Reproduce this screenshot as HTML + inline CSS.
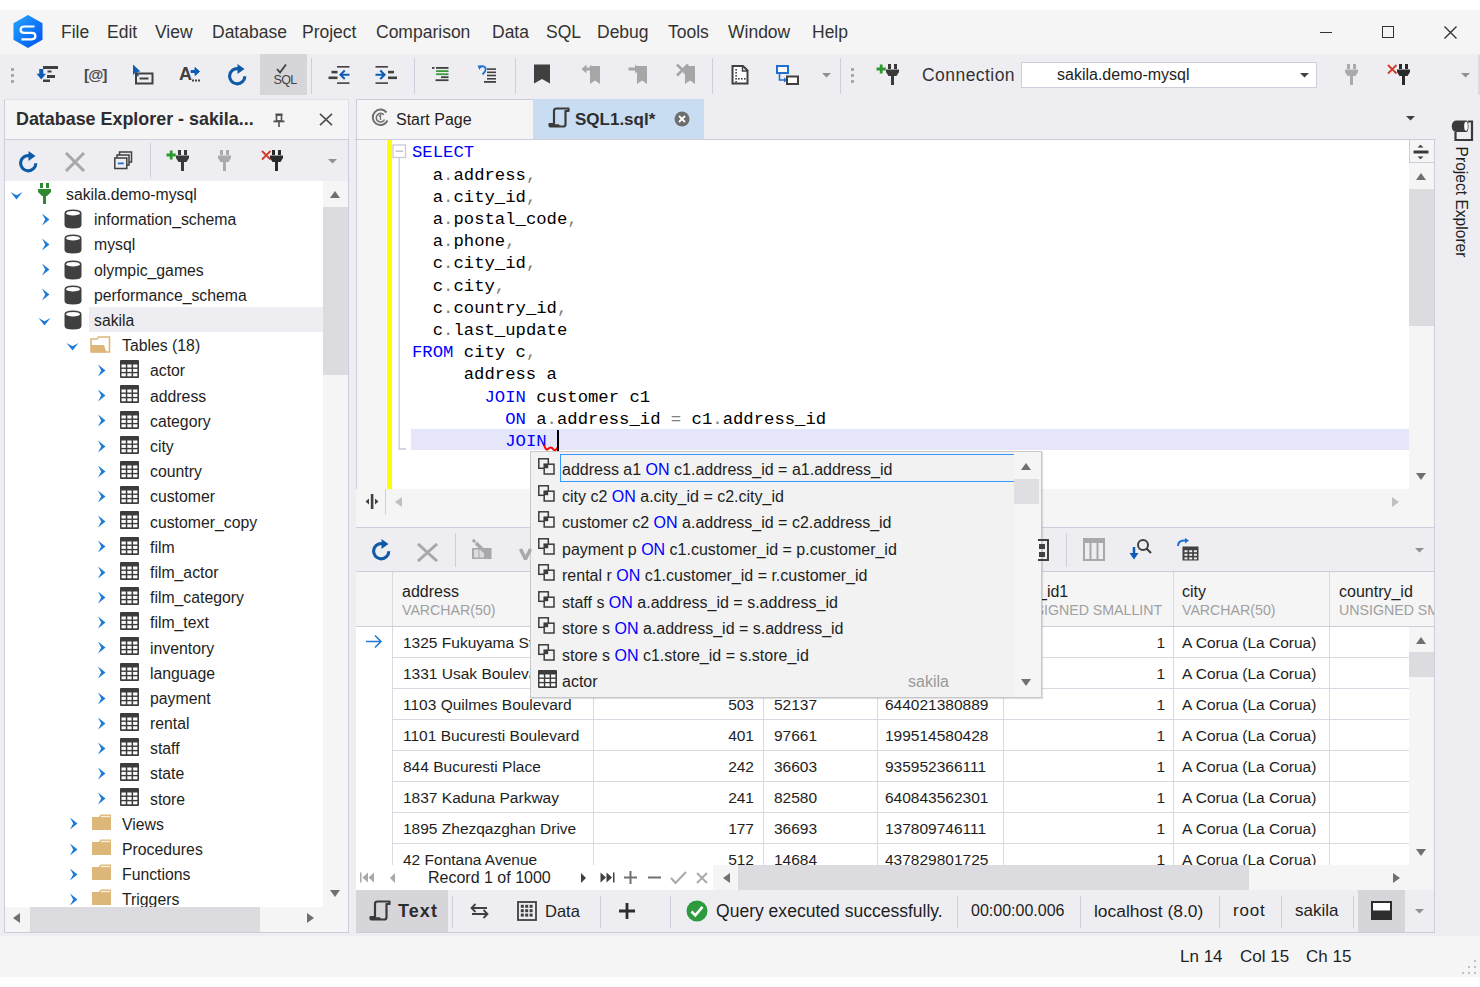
<!DOCTYPE html><html><head><meta charset="utf-8"><style>
html,body{margin:0;padding:0;}
body{width:1480px;height:987px;overflow:hidden;position:relative;background:#fff;font-family:"Liberation Sans",sans-serif;}
.a{position:absolute;}
.t{position:absolute;white-space:nowrap;line-height:30px;height:30px;}
.m{font-family:"Liberation Mono",monospace;}
</style></head><body>
<div class="a" style="left:0px;top:0px;width:1480px;height:10px;background:#FFFFFF;"></div>
<div class="a" style="left:0px;top:10px;width:1480px;height:44px;background:#F5F5F5;"></div>
<div class="a" style="left:0px;top:54px;width:1480px;height:45px;background:#EEEEF2;"></div>
<div class="a" style="left:0px;top:99px;width:1480px;height:837px;background:#EEEEF2;"></div>
<div class="a" style="left:0px;top:936px;width:1480px;height:41px;background:#F5F5F5;"></div>
<div class="a" style="left:0px;top:977px;width:1480px;height:10px;background:#FFFFFF;"></div>
<div class="t" style="left:61px;top:16.50px;font-size:17.5px;color:#333333;font-weight:normal;">File</div>
<div class="t" style="left:107px;top:16.50px;font-size:17.5px;color:#333333;font-weight:normal;">Edit</div>
<div class="t" style="left:155px;top:16.50px;font-size:17.5px;color:#333333;font-weight:normal;">View</div>
<div class="t" style="left:212px;top:16.50px;font-size:17.5px;color:#333333;font-weight:normal;">Database</div>
<div class="t" style="left:302px;top:16.50px;font-size:17.5px;color:#333333;font-weight:normal;">Project</div>
<div class="t" style="left:376px;top:16.50px;font-size:17.5px;color:#333333;font-weight:normal;">Comparison</div>
<div class="t" style="left:492px;top:16.50px;font-size:17.5px;color:#333333;font-weight:normal;">Data</div>
<div class="t" style="left:546px;top:16.50px;font-size:17.5px;color:#333333;font-weight:normal;">SQL</div>
<div class="t" style="left:597px;top:16.50px;font-size:17.5px;color:#333333;font-weight:normal;">Debug</div>
<div class="t" style="left:668px;top:16.50px;font-size:17.5px;color:#333333;font-weight:normal;">Tools</div>
<div class="t" style="left:728px;top:16.50px;font-size:17.5px;color:#333333;font-weight:normal;">Window</div>
<div class="t" style="left:812px;top:16.50px;font-size:17.5px;color:#333333;font-weight:normal;">Help</div>
<div class="a" style="left:1320px;top:32px;width:12px;height:1.3px;background:#333333;"></div>
<div class="a" style="left:1382px;top:26px;width:12px;height:12px;border:1.3px solid #333333;box-sizing:border-box;"></div>
<svg class="a" style="left:1444px;top:26px;" width="13" height="13" viewBox="0 0 13 13"><path d="M0.5 0.5L12.5 12.5M12.5 0.5L0.5 12.5" stroke="#333333" stroke-width="1.4"/></svg>
<div class="a" style="left:260px;top:54px;width:47px;height:41px;background:#D6D6DA;"></div>
<div class="a" style="left:311px;top:58px;width:1px;height:36px;background:#CCCEDB;"></div>
<div class="a" style="left:414px;top:58px;width:1px;height:36px;background:#CCCEDB;"></div>
<div class="a" style="left:515px;top:58px;width:1px;height:36px;background:#CCCEDB;"></div>
<div class="a" style="left:712px;top:58px;width:1px;height:36px;background:#CCCEDB;"></div>
<div class="a" style="left:840px;top:58px;width:1px;height:36px;background:#CCCEDB;"></div>
<div class="t" style="left:922px;top:60.00px;font-size:17.5px;color:#333333;font-weight:normal;letter-spacing:0.45px;">Connection</div>
<div class="a" style="left:1021px;top:62px;width:296px;height:26px;background:#FFFFFF;border:1px solid #CCCEDB;box-sizing:border-box;"></div>
<div class="t" style="left:1057px;top:60.00px;font-size:16px;color:#1E1E1E;font-weight:normal;">sakila.demo-mysql</div>
<div class="a" style="left:4px;top:99px;width:345px;height:834px;background:#FFFFFF;border:1px solid #CCCEDB;box-sizing:border-box;"></div>
<div class="a" style="left:5px;top:100px;width:343px;height:39px;background:#F5F5F5;"></div>
<div class="a" style="left:5px;top:139px;width:343px;height:1px;background:#CCCEDB;"></div>
<div class="a" style="left:5px;top:140px;width:343px;height:41px;background:#EEEEF2;"></div>
<div class="t" style="left:16px;top:104.30px;font-size:17.9px;color:#2D2D30;font-weight:bold;">Database Explorer - sakila...</div>
<div class="a" style="left:323px;top:181px;width:25px;height:726px;background:#F5F5F5;"></div>
<div class="a" style="left:323px;top:207px;width:25px;height:168px;background:#DCDCE0;"></div>
<div class="a" style="left:5px;top:907px;width:343px;height:25px;background:#F5F5F5;"></div>
<div class="a" style="left:30px;top:907px;width:230px;height:25px;background:#DCDCE0;"></div>
<div class="a" style="left:355px;top:99px;width:81px;height:1px;background:#EEEEF2;"></div>
<div class="a" style="left:356px;top:99px;width:177px;height:40px;background:#F5F5F5;"></div>
<div class="a" style="left:533px;top:99px;width:171px;height:40px;background:#C9DDF2;"></div>
<div class="a" style="left:355px;top:139px;width:1081px;height:1px;background:#CCCEDB;"></div>
<div class="a" style="left:356px;top:140px;width:1px;height:793px;background:#CCCEDB;"></div>
<div class="a" style="left:1434px;top:140px;width:1px;height:793px;background:#CCCEDB;"></div>
<div class="t" style="left:396px;top:105.00px;font-size:16px;color:#1E1E1E;font-weight:normal;">Start Page</div>
<div class="t" style="left:575px;top:104.80px;font-size:17px;color:#2D2D30;font-weight:bold;">SQL1.sql*</div>
<div class="a" style="left:357px;top:140px;width:1078px;height:349px;background:#FFFFFF;"></div>
<div class="a" style="left:387px;top:140px;width:5px;height:349px;background:#FFFF00;"></div>
<div class="a" style="left:411px;top:429px;width:998px;height:21px;background:#E6E6FA;"></div>
<div class="a" style="left:1409px;top:140px;width:25px;height:349px;background:#F5F5F5;"></div>
<div class="a" style="left:1409px;top:189px;width:25px;height:137px;background:#DCDCE0;"></div>
<div class="a" style="left:356px;top:489px;width:1079px;height:38px;background:#F5F5F5;"></div>
<div class="a" style="left:356px;top:527px;width:1079px;height:1px;background:#CCCEDB;"></div>
<div class="a" style="left:356px;top:528px;width:1079px;height:43px;background:#EEEEF2;"></div>
<div class="a" style="left:356px;top:571px;width:1079px;height:1px;background:#CCCEDB;"></div>
<div class="a" style="left:356px;top:572px;width:1079px;height:54px;background:#F5F5F5;"></div>
<div class="a" style="left:356px;top:626px;width:1079px;height:1px;background:#CCCEDB;"></div>
<div class="a" style="left:356px;top:627px;width:1053px;height:238px;background:#FFFFFF;"></div>
<div class="a" style="left:1409px;top:627px;width:26px;height:238px;background:#F5F5F5;"></div>
<div class="a" style="left:1409px;top:652px;width:26px;height:25px;background:#DCDCE0;"></div>
<div class="a" style="left:356px;top:865px;width:357px;height:25px;background:#FFFFFF;"></div>
<div class="a" style="left:713px;top:865px;width:722px;height:25px;background:#F5F5F5;"></div>
<div class="a" style="left:738px;top:865px;width:511px;height:25px;background:#DCDCE0;"></div>
<div class="a" style="left:356px;top:890px;width:1079px;height:42px;background:#EEEEF2;"></div>
<div class="a" style="left:356px;top:932px;width:1079px;height:1px;background:#CCCEDB;"></div>
<div class="a" style="left:356px;top:890px;width:92px;height:42px;background:#D6D6DA;"></div>
<div class="a" style="left:1358px;top:890px;width:47px;height:42px;background:#D6D6DA;"></div>
<div class="t" style="left:1461px;top:187.00px;font-size:15.6px;color:#1E1E1E;font-weight:normal;transform:translate(-50%,0) rotate(90deg);transform-origin:50% 50%;">Project Explorer</div>
<div class="t" style="left:1180px;top:941.80px;font-size:17px;color:#1E1E1E;font-weight:normal;">Ln 14</div>
<div class="t" style="left:1240px;top:941.80px;font-size:17px;color:#1E1E1E;font-weight:normal;">Col 15</div>
<div class="t" style="left:1306px;top:941.80px;font-size:17px;color:#1E1E1E;font-weight:normal;">Ch 15</div>
<div class="a" style="left:89px;top:307px;width:234px;height:25px;background:#EEEEF2;"></div>
<svg class="a" style="left:9.5px;top:191.0px;" width="13" height="9" viewBox="0 0 13 9"><path d="M0.5 1 L6.5 8.5 L12.5 1 L6.5 4.2 Z" fill="#1F7BD8"/></svg>
<svg class="a" style="left:38px;top:183.0px;" width="13" height="21" viewBox="0 0 13 21"><rect x="2" y="0" width="3" height="5" fill="#2F8A2F"/><rect x="8" y="0" width="3" height="5" fill="#2F8A2F"/><path d="M0 6 L13 6 L13 9 L9 13 L4 13 L0 9 Z" fill="#2F8A2F"/><rect x="5" y="12" width="3" height="9" fill="#2F8A2F"/></svg>
<div class="t" style="left:66px;top:180.10px;font-size:15.8px;color:#1E1E1E;font-weight:normal;">sakila.demo-mysql</div>
<svg class="a" style="left:40.5px;top:212.89px;" width="10" height="13" viewBox="0 0 10 13"><path d="M1 0.5 L8.5 6.5 L1 12.5 L4.2 6.5 Z" fill="#1F7BD8"/></svg>
<svg class="a" style="left:64px;top:209.19px;" width="18" height="20" viewBox="0 0 18 20"><path d="M0.5 4 Q0.5 0.5 9 0.5 Q17.5 0.5 17.5 4 L17.5 16 Q17.5 19.5 9 19.5 Q0.5 19.5 0.5 16 Z" fill="#404040"/><ellipse cx="9" cy="4.2" rx="6.8" ry="2.3" fill="#fff"/></svg>
<div class="t" style="left:94px;top:205.29px;font-size:15.8px;color:#1E1E1E;font-weight:normal;">information_schema</div>
<svg class="a" style="left:40.5px;top:238.07999999999998px;" width="10" height="13" viewBox="0 0 10 13"><path d="M1 0.5 L8.5 6.5 L1 12.5 L4.2 6.5 Z" fill="#1F7BD8"/></svg>
<svg class="a" style="left:64px;top:234.38px;" width="18" height="20" viewBox="0 0 18 20"><path d="M0.5 4 Q0.5 0.5 9 0.5 Q17.5 0.5 17.5 4 L17.5 16 Q17.5 19.5 9 19.5 Q0.5 19.5 0.5 16 Z" fill="#404040"/><ellipse cx="9" cy="4.2" rx="6.8" ry="2.3" fill="#fff"/></svg>
<div class="t" style="left:94px;top:230.48px;font-size:15.8px;color:#1E1E1E;font-weight:normal;">mysql</div>
<svg class="a" style="left:40.5px;top:263.27px;" width="10" height="13" viewBox="0 0 10 13"><path d="M1 0.5 L8.5 6.5 L1 12.5 L4.2 6.5 Z" fill="#1F7BD8"/></svg>
<svg class="a" style="left:64px;top:259.57px;" width="18" height="20" viewBox="0 0 18 20"><path d="M0.5 4 Q0.5 0.5 9 0.5 Q17.5 0.5 17.5 4 L17.5 16 Q17.5 19.5 9 19.5 Q0.5 19.5 0.5 16 Z" fill="#404040"/><ellipse cx="9" cy="4.2" rx="6.8" ry="2.3" fill="#fff"/></svg>
<div class="t" style="left:94px;top:255.67px;font-size:15.8px;color:#1E1E1E;font-weight:normal;">olympic_games</div>
<svg class="a" style="left:40.5px;top:288.46px;" width="10" height="13" viewBox="0 0 10 13"><path d="M1 0.5 L8.5 6.5 L1 12.5 L4.2 6.5 Z" fill="#1F7BD8"/></svg>
<svg class="a" style="left:64px;top:284.76px;" width="18" height="20" viewBox="0 0 18 20"><path d="M0.5 4 Q0.5 0.5 9 0.5 Q17.5 0.5 17.5 4 L17.5 16 Q17.5 19.5 9 19.5 Q0.5 19.5 0.5 16 Z" fill="#404040"/><ellipse cx="9" cy="4.2" rx="6.8" ry="2.3" fill="#fff"/></svg>
<div class="t" style="left:94px;top:280.86px;font-size:15.8px;color:#1E1E1E;font-weight:normal;">performance_schema</div>
<svg class="a" style="left:37.5px;top:316.95px;" width="13" height="9" viewBox="0 0 13 9"><path d="M0.5 1 L6.5 8.5 L12.5 1 L6.5 4.2 Z" fill="#1F7BD8"/></svg>
<svg class="a" style="left:64px;top:309.95px;" width="18" height="20" viewBox="0 0 18 20"><path d="M0.5 4 Q0.5 0.5 9 0.5 Q17.5 0.5 17.5 4 L17.5 16 Q17.5 19.5 9 19.5 Q0.5 19.5 0.5 16 Z" fill="#404040"/><ellipse cx="9" cy="4.2" rx="6.8" ry="2.3" fill="#fff"/></svg>
<div class="t" style="left:94px;top:306.05px;font-size:15.8px;color:#1E1E1E;font-weight:normal;">sakila</div>
<svg class="a" style="left:65.5px;top:342.14px;" width="13" height="9" viewBox="0 0 13 9"><path d="M0.5 1 L6.5 8.5 L12.5 1 L6.5 4.2 Z" fill="#1F7BD8"/></svg>
<svg class="a" style="left:90px;top:336.14px;" width="21" height="17" viewBox="0 0 21 17"><path d="M1 16 L1 3 L7 3 L8.5 1 L19.5 1 L19.5 16 Z" fill="none" stroke="#DDB77A" stroke-width="1.6"/><path d="M0.5 9 L14 9 L16.5 16.5 L1.5 16.5 Z" fill="#DDB77A"/></svg>
<div class="t" style="left:122px;top:331.24px;font-size:15.8px;color:#1E1E1E;font-weight:normal;">Tables (18)</div>
<svg class="a" style="left:96.5px;top:364.03000000000003px;" width="10" height="13" viewBox="0 0 10 13"><path d="M1 0.5 L8.5 6.5 L1 12.5 L4.2 6.5 Z" fill="#1F7BD8"/></svg>
<svg class="a" style="left:120px;top:360.23px;" width="19" height="18" viewBox="0 0 19 18"><rect x="0" y="0" width="19" height="18" rx="1" fill="#3C3C3C"/><rect x="1.5" y="4.5" width="4.3" height="3" fill="#fff"/><rect x="7.3" y="4.5" width="4.3" height="3" fill="#fff"/><rect x="13.1" y="4.5" width="4.3" height="3" fill="#fff"/><rect x="1.5" y="8.9" width="4.3" height="3" fill="#fff"/><rect x="7.3" y="8.9" width="4.3" height="3" fill="#fff"/><rect x="13.1" y="8.9" width="4.3" height="3" fill="#fff"/><rect x="1.5" y="13.3" width="4.3" height="3" fill="#fff"/><rect x="7.3" y="13.3" width="4.3" height="3" fill="#fff"/><rect x="13.1" y="13.3" width="4.3" height="3" fill="#fff"/></svg>
<div class="t" style="left:150px;top:356.43px;font-size:15.8px;color:#1E1E1E;font-weight:normal;">actor</div>
<svg class="a" style="left:96.5px;top:389.21999999999997px;" width="10" height="13" viewBox="0 0 10 13"><path d="M1 0.5 L8.5 6.5 L1 12.5 L4.2 6.5 Z" fill="#1F7BD8"/></svg>
<svg class="a" style="left:120px;top:385.41999999999996px;" width="19" height="18" viewBox="0 0 19 18"><rect x="0" y="0" width="19" height="18" rx="1" fill="#3C3C3C"/><rect x="1.5" y="4.5" width="4.3" height="3" fill="#fff"/><rect x="7.3" y="4.5" width="4.3" height="3" fill="#fff"/><rect x="13.1" y="4.5" width="4.3" height="3" fill="#fff"/><rect x="1.5" y="8.9" width="4.3" height="3" fill="#fff"/><rect x="7.3" y="8.9" width="4.3" height="3" fill="#fff"/><rect x="13.1" y="8.9" width="4.3" height="3" fill="#fff"/><rect x="1.5" y="13.3" width="4.3" height="3" fill="#fff"/><rect x="7.3" y="13.3" width="4.3" height="3" fill="#fff"/><rect x="13.1" y="13.3" width="4.3" height="3" fill="#fff"/></svg>
<div class="t" style="left:150px;top:381.62px;font-size:15.8px;color:#1E1E1E;font-weight:normal;">address</div>
<svg class="a" style="left:96.5px;top:414.41px;" width="10" height="13" viewBox="0 0 10 13"><path d="M1 0.5 L8.5 6.5 L1 12.5 L4.2 6.5 Z" fill="#1F7BD8"/></svg>
<svg class="a" style="left:120px;top:410.61px;" width="19" height="18" viewBox="0 0 19 18"><rect x="0" y="0" width="19" height="18" rx="1" fill="#3C3C3C"/><rect x="1.5" y="4.5" width="4.3" height="3" fill="#fff"/><rect x="7.3" y="4.5" width="4.3" height="3" fill="#fff"/><rect x="13.1" y="4.5" width="4.3" height="3" fill="#fff"/><rect x="1.5" y="8.9" width="4.3" height="3" fill="#fff"/><rect x="7.3" y="8.9" width="4.3" height="3" fill="#fff"/><rect x="13.1" y="8.9" width="4.3" height="3" fill="#fff"/><rect x="1.5" y="13.3" width="4.3" height="3" fill="#fff"/><rect x="7.3" y="13.3" width="4.3" height="3" fill="#fff"/><rect x="13.1" y="13.3" width="4.3" height="3" fill="#fff"/></svg>
<div class="t" style="left:150px;top:406.81px;font-size:15.8px;color:#1E1E1E;font-weight:normal;">category</div>
<svg class="a" style="left:96.5px;top:439.59999999999997px;" width="10" height="13" viewBox="0 0 10 13"><path d="M1 0.5 L8.5 6.5 L1 12.5 L4.2 6.5 Z" fill="#1F7BD8"/></svg>
<svg class="a" style="left:120px;top:435.79999999999995px;" width="19" height="18" viewBox="0 0 19 18"><rect x="0" y="0" width="19" height="18" rx="1" fill="#3C3C3C"/><rect x="1.5" y="4.5" width="4.3" height="3" fill="#fff"/><rect x="7.3" y="4.5" width="4.3" height="3" fill="#fff"/><rect x="13.1" y="4.5" width="4.3" height="3" fill="#fff"/><rect x="1.5" y="8.9" width="4.3" height="3" fill="#fff"/><rect x="7.3" y="8.9" width="4.3" height="3" fill="#fff"/><rect x="13.1" y="8.9" width="4.3" height="3" fill="#fff"/><rect x="1.5" y="13.3" width="4.3" height="3" fill="#fff"/><rect x="7.3" y="13.3" width="4.3" height="3" fill="#fff"/><rect x="13.1" y="13.3" width="4.3" height="3" fill="#fff"/></svg>
<div class="t" style="left:150px;top:432.00px;font-size:15.8px;color:#1E1E1E;font-weight:normal;">city</div>
<svg class="a" style="left:96.5px;top:464.79px;" width="10" height="13" viewBox="0 0 10 13"><path d="M1 0.5 L8.5 6.5 L1 12.5 L4.2 6.5 Z" fill="#1F7BD8"/></svg>
<svg class="a" style="left:120px;top:460.99px;" width="19" height="18" viewBox="0 0 19 18"><rect x="0" y="0" width="19" height="18" rx="1" fill="#3C3C3C"/><rect x="1.5" y="4.5" width="4.3" height="3" fill="#fff"/><rect x="7.3" y="4.5" width="4.3" height="3" fill="#fff"/><rect x="13.1" y="4.5" width="4.3" height="3" fill="#fff"/><rect x="1.5" y="8.9" width="4.3" height="3" fill="#fff"/><rect x="7.3" y="8.9" width="4.3" height="3" fill="#fff"/><rect x="13.1" y="8.9" width="4.3" height="3" fill="#fff"/><rect x="1.5" y="13.3" width="4.3" height="3" fill="#fff"/><rect x="7.3" y="13.3" width="4.3" height="3" fill="#fff"/><rect x="13.1" y="13.3" width="4.3" height="3" fill="#fff"/></svg>
<div class="t" style="left:150px;top:457.19px;font-size:15.8px;color:#1E1E1E;font-weight:normal;">country</div>
<svg class="a" style="left:96.5px;top:489.98px;" width="10" height="13" viewBox="0 0 10 13"><path d="M1 0.5 L8.5 6.5 L1 12.5 L4.2 6.5 Z" fill="#1F7BD8"/></svg>
<svg class="a" style="left:120px;top:486.18px;" width="19" height="18" viewBox="0 0 19 18"><rect x="0" y="0" width="19" height="18" rx="1" fill="#3C3C3C"/><rect x="1.5" y="4.5" width="4.3" height="3" fill="#fff"/><rect x="7.3" y="4.5" width="4.3" height="3" fill="#fff"/><rect x="13.1" y="4.5" width="4.3" height="3" fill="#fff"/><rect x="1.5" y="8.9" width="4.3" height="3" fill="#fff"/><rect x="7.3" y="8.9" width="4.3" height="3" fill="#fff"/><rect x="13.1" y="8.9" width="4.3" height="3" fill="#fff"/><rect x="1.5" y="13.3" width="4.3" height="3" fill="#fff"/><rect x="7.3" y="13.3" width="4.3" height="3" fill="#fff"/><rect x="13.1" y="13.3" width="4.3" height="3" fill="#fff"/></svg>
<div class="t" style="left:150px;top:482.38px;font-size:15.8px;color:#1E1E1E;font-weight:normal;">customer</div>
<svg class="a" style="left:96.5px;top:515.1700000000001px;" width="10" height="13" viewBox="0 0 10 13"><path d="M1 0.5 L8.5 6.5 L1 12.5 L4.2 6.5 Z" fill="#1F7BD8"/></svg>
<svg class="a" style="left:120px;top:511.37px;" width="19" height="18" viewBox="0 0 19 18"><rect x="0" y="0" width="19" height="18" rx="1" fill="#3C3C3C"/><rect x="1.5" y="4.5" width="4.3" height="3" fill="#fff"/><rect x="7.3" y="4.5" width="4.3" height="3" fill="#fff"/><rect x="13.1" y="4.5" width="4.3" height="3" fill="#fff"/><rect x="1.5" y="8.9" width="4.3" height="3" fill="#fff"/><rect x="7.3" y="8.9" width="4.3" height="3" fill="#fff"/><rect x="13.1" y="8.9" width="4.3" height="3" fill="#fff"/><rect x="1.5" y="13.3" width="4.3" height="3" fill="#fff"/><rect x="7.3" y="13.3" width="4.3" height="3" fill="#fff"/><rect x="13.1" y="13.3" width="4.3" height="3" fill="#fff"/></svg>
<div class="t" style="left:150px;top:507.57px;font-size:15.8px;color:#1E1E1E;font-weight:normal;">customer_copy</div>
<svg class="a" style="left:96.5px;top:540.3600000000001px;" width="10" height="13" viewBox="0 0 10 13"><path d="M1 0.5 L8.5 6.5 L1 12.5 L4.2 6.5 Z" fill="#1F7BD8"/></svg>
<svg class="a" style="left:120px;top:536.5600000000001px;" width="19" height="18" viewBox="0 0 19 18"><rect x="0" y="0" width="19" height="18" rx="1" fill="#3C3C3C"/><rect x="1.5" y="4.5" width="4.3" height="3" fill="#fff"/><rect x="7.3" y="4.5" width="4.3" height="3" fill="#fff"/><rect x="13.1" y="4.5" width="4.3" height="3" fill="#fff"/><rect x="1.5" y="8.9" width="4.3" height="3" fill="#fff"/><rect x="7.3" y="8.9" width="4.3" height="3" fill="#fff"/><rect x="13.1" y="8.9" width="4.3" height="3" fill="#fff"/><rect x="1.5" y="13.3" width="4.3" height="3" fill="#fff"/><rect x="7.3" y="13.3" width="4.3" height="3" fill="#fff"/><rect x="13.1" y="13.3" width="4.3" height="3" fill="#fff"/></svg>
<div class="t" style="left:150px;top:532.76px;font-size:15.8px;color:#1E1E1E;font-weight:normal;">film</div>
<svg class="a" style="left:96.5px;top:565.5500000000001px;" width="10" height="13" viewBox="0 0 10 13"><path d="M1 0.5 L8.5 6.5 L1 12.5 L4.2 6.5 Z" fill="#1F7BD8"/></svg>
<svg class="a" style="left:120px;top:561.75px;" width="19" height="18" viewBox="0 0 19 18"><rect x="0" y="0" width="19" height="18" rx="1" fill="#3C3C3C"/><rect x="1.5" y="4.5" width="4.3" height="3" fill="#fff"/><rect x="7.3" y="4.5" width="4.3" height="3" fill="#fff"/><rect x="13.1" y="4.5" width="4.3" height="3" fill="#fff"/><rect x="1.5" y="8.9" width="4.3" height="3" fill="#fff"/><rect x="7.3" y="8.9" width="4.3" height="3" fill="#fff"/><rect x="13.1" y="8.9" width="4.3" height="3" fill="#fff"/><rect x="1.5" y="13.3" width="4.3" height="3" fill="#fff"/><rect x="7.3" y="13.3" width="4.3" height="3" fill="#fff"/><rect x="13.1" y="13.3" width="4.3" height="3" fill="#fff"/></svg>
<div class="t" style="left:150px;top:557.95px;font-size:15.8px;color:#1E1E1E;font-weight:normal;">film_actor</div>
<svg class="a" style="left:96.5px;top:590.74px;" width="10" height="13" viewBox="0 0 10 13"><path d="M1 0.5 L8.5 6.5 L1 12.5 L4.2 6.5 Z" fill="#1F7BD8"/></svg>
<svg class="a" style="left:120px;top:586.9399999999999px;" width="19" height="18" viewBox="0 0 19 18"><rect x="0" y="0" width="19" height="18" rx="1" fill="#3C3C3C"/><rect x="1.5" y="4.5" width="4.3" height="3" fill="#fff"/><rect x="7.3" y="4.5" width="4.3" height="3" fill="#fff"/><rect x="13.1" y="4.5" width="4.3" height="3" fill="#fff"/><rect x="1.5" y="8.9" width="4.3" height="3" fill="#fff"/><rect x="7.3" y="8.9" width="4.3" height="3" fill="#fff"/><rect x="13.1" y="8.9" width="4.3" height="3" fill="#fff"/><rect x="1.5" y="13.3" width="4.3" height="3" fill="#fff"/><rect x="7.3" y="13.3" width="4.3" height="3" fill="#fff"/><rect x="13.1" y="13.3" width="4.3" height="3" fill="#fff"/></svg>
<div class="t" style="left:150px;top:583.14px;font-size:15.8px;color:#1E1E1E;font-weight:normal;">film_category</div>
<svg class="a" style="left:96.5px;top:615.9300000000001px;" width="10" height="13" viewBox="0 0 10 13"><path d="M1 0.5 L8.5 6.5 L1 12.5 L4.2 6.5 Z" fill="#1F7BD8"/></svg>
<svg class="a" style="left:120px;top:612.13px;" width="19" height="18" viewBox="0 0 19 18"><rect x="0" y="0" width="19" height="18" rx="1" fill="#3C3C3C"/><rect x="1.5" y="4.5" width="4.3" height="3" fill="#fff"/><rect x="7.3" y="4.5" width="4.3" height="3" fill="#fff"/><rect x="13.1" y="4.5" width="4.3" height="3" fill="#fff"/><rect x="1.5" y="8.9" width="4.3" height="3" fill="#fff"/><rect x="7.3" y="8.9" width="4.3" height="3" fill="#fff"/><rect x="13.1" y="8.9" width="4.3" height="3" fill="#fff"/><rect x="1.5" y="13.3" width="4.3" height="3" fill="#fff"/><rect x="7.3" y="13.3" width="4.3" height="3" fill="#fff"/><rect x="13.1" y="13.3" width="4.3" height="3" fill="#fff"/></svg>
<div class="t" style="left:150px;top:608.33px;font-size:15.8px;color:#1E1E1E;font-weight:normal;">film_text</div>
<svg class="a" style="left:96.5px;top:641.1200000000001px;" width="10" height="13" viewBox="0 0 10 13"><path d="M1 0.5 L8.5 6.5 L1 12.5 L4.2 6.5 Z" fill="#1F7BD8"/></svg>
<svg class="a" style="left:120px;top:637.32px;" width="19" height="18" viewBox="0 0 19 18"><rect x="0" y="0" width="19" height="18" rx="1" fill="#3C3C3C"/><rect x="1.5" y="4.5" width="4.3" height="3" fill="#fff"/><rect x="7.3" y="4.5" width="4.3" height="3" fill="#fff"/><rect x="13.1" y="4.5" width="4.3" height="3" fill="#fff"/><rect x="1.5" y="8.9" width="4.3" height="3" fill="#fff"/><rect x="7.3" y="8.9" width="4.3" height="3" fill="#fff"/><rect x="13.1" y="8.9" width="4.3" height="3" fill="#fff"/><rect x="1.5" y="13.3" width="4.3" height="3" fill="#fff"/><rect x="7.3" y="13.3" width="4.3" height="3" fill="#fff"/><rect x="13.1" y="13.3" width="4.3" height="3" fill="#fff"/></svg>
<div class="t" style="left:150px;top:633.52px;font-size:15.8px;color:#1E1E1E;font-weight:normal;">inventory</div>
<svg class="a" style="left:96.5px;top:666.3100000000001px;" width="10" height="13" viewBox="0 0 10 13"><path d="M1 0.5 L8.5 6.5 L1 12.5 L4.2 6.5 Z" fill="#1F7BD8"/></svg>
<svg class="a" style="left:120px;top:662.51px;" width="19" height="18" viewBox="0 0 19 18"><rect x="0" y="0" width="19" height="18" rx="1" fill="#3C3C3C"/><rect x="1.5" y="4.5" width="4.3" height="3" fill="#fff"/><rect x="7.3" y="4.5" width="4.3" height="3" fill="#fff"/><rect x="13.1" y="4.5" width="4.3" height="3" fill="#fff"/><rect x="1.5" y="8.9" width="4.3" height="3" fill="#fff"/><rect x="7.3" y="8.9" width="4.3" height="3" fill="#fff"/><rect x="13.1" y="8.9" width="4.3" height="3" fill="#fff"/><rect x="1.5" y="13.3" width="4.3" height="3" fill="#fff"/><rect x="7.3" y="13.3" width="4.3" height="3" fill="#fff"/><rect x="13.1" y="13.3" width="4.3" height="3" fill="#fff"/></svg>
<div class="t" style="left:150px;top:658.71px;font-size:15.8px;color:#1E1E1E;font-weight:normal;">language</div>
<svg class="a" style="left:96.5px;top:691.5px;" width="10" height="13" viewBox="0 0 10 13"><path d="M1 0.5 L8.5 6.5 L1 12.5 L4.2 6.5 Z" fill="#1F7BD8"/></svg>
<svg class="a" style="left:120px;top:687.6999999999999px;" width="19" height="18" viewBox="0 0 19 18"><rect x="0" y="0" width="19" height="18" rx="1" fill="#3C3C3C"/><rect x="1.5" y="4.5" width="4.3" height="3" fill="#fff"/><rect x="7.3" y="4.5" width="4.3" height="3" fill="#fff"/><rect x="13.1" y="4.5" width="4.3" height="3" fill="#fff"/><rect x="1.5" y="8.9" width="4.3" height="3" fill="#fff"/><rect x="7.3" y="8.9" width="4.3" height="3" fill="#fff"/><rect x="13.1" y="8.9" width="4.3" height="3" fill="#fff"/><rect x="1.5" y="13.3" width="4.3" height="3" fill="#fff"/><rect x="7.3" y="13.3" width="4.3" height="3" fill="#fff"/><rect x="13.1" y="13.3" width="4.3" height="3" fill="#fff"/></svg>
<div class="t" style="left:150px;top:683.90px;font-size:15.8px;color:#1E1E1E;font-weight:normal;">payment</div>
<svg class="a" style="left:96.5px;top:716.69px;" width="10" height="13" viewBox="0 0 10 13"><path d="M1 0.5 L8.5 6.5 L1 12.5 L4.2 6.5 Z" fill="#1F7BD8"/></svg>
<svg class="a" style="left:120px;top:712.89px;" width="19" height="18" viewBox="0 0 19 18"><rect x="0" y="0" width="19" height="18" rx="1" fill="#3C3C3C"/><rect x="1.5" y="4.5" width="4.3" height="3" fill="#fff"/><rect x="7.3" y="4.5" width="4.3" height="3" fill="#fff"/><rect x="13.1" y="4.5" width="4.3" height="3" fill="#fff"/><rect x="1.5" y="8.9" width="4.3" height="3" fill="#fff"/><rect x="7.3" y="8.9" width="4.3" height="3" fill="#fff"/><rect x="13.1" y="8.9" width="4.3" height="3" fill="#fff"/><rect x="1.5" y="13.3" width="4.3" height="3" fill="#fff"/><rect x="7.3" y="13.3" width="4.3" height="3" fill="#fff"/><rect x="13.1" y="13.3" width="4.3" height="3" fill="#fff"/></svg>
<div class="t" style="left:150px;top:709.09px;font-size:15.8px;color:#1E1E1E;font-weight:normal;">rental</div>
<svg class="a" style="left:96.5px;top:741.8800000000001px;" width="10" height="13" viewBox="0 0 10 13"><path d="M1 0.5 L8.5 6.5 L1 12.5 L4.2 6.5 Z" fill="#1F7BD8"/></svg>
<svg class="a" style="left:120px;top:738.08px;" width="19" height="18" viewBox="0 0 19 18"><rect x="0" y="0" width="19" height="18" rx="1" fill="#3C3C3C"/><rect x="1.5" y="4.5" width="4.3" height="3" fill="#fff"/><rect x="7.3" y="4.5" width="4.3" height="3" fill="#fff"/><rect x="13.1" y="4.5" width="4.3" height="3" fill="#fff"/><rect x="1.5" y="8.9" width="4.3" height="3" fill="#fff"/><rect x="7.3" y="8.9" width="4.3" height="3" fill="#fff"/><rect x="13.1" y="8.9" width="4.3" height="3" fill="#fff"/><rect x="1.5" y="13.3" width="4.3" height="3" fill="#fff"/><rect x="7.3" y="13.3" width="4.3" height="3" fill="#fff"/><rect x="13.1" y="13.3" width="4.3" height="3" fill="#fff"/></svg>
<div class="t" style="left:150px;top:734.28px;font-size:15.8px;color:#1E1E1E;font-weight:normal;">staff</div>
<svg class="a" style="left:96.5px;top:767.07px;" width="10" height="13" viewBox="0 0 10 13"><path d="M1 0.5 L8.5 6.5 L1 12.5 L4.2 6.5 Z" fill="#1F7BD8"/></svg>
<svg class="a" style="left:120px;top:763.27px;" width="19" height="18" viewBox="0 0 19 18"><rect x="0" y="0" width="19" height="18" rx="1" fill="#3C3C3C"/><rect x="1.5" y="4.5" width="4.3" height="3" fill="#fff"/><rect x="7.3" y="4.5" width="4.3" height="3" fill="#fff"/><rect x="13.1" y="4.5" width="4.3" height="3" fill="#fff"/><rect x="1.5" y="8.9" width="4.3" height="3" fill="#fff"/><rect x="7.3" y="8.9" width="4.3" height="3" fill="#fff"/><rect x="13.1" y="8.9" width="4.3" height="3" fill="#fff"/><rect x="1.5" y="13.3" width="4.3" height="3" fill="#fff"/><rect x="7.3" y="13.3" width="4.3" height="3" fill="#fff"/><rect x="13.1" y="13.3" width="4.3" height="3" fill="#fff"/></svg>
<div class="t" style="left:150px;top:759.47px;font-size:15.8px;color:#1E1E1E;font-weight:normal;">state</div>
<svg class="a" style="left:96.5px;top:792.2600000000001px;" width="10" height="13" viewBox="0 0 10 13"><path d="M1 0.5 L8.5 6.5 L1 12.5 L4.2 6.5 Z" fill="#1F7BD8"/></svg>
<svg class="a" style="left:120px;top:788.46px;" width="19" height="18" viewBox="0 0 19 18"><rect x="0" y="0" width="19" height="18" rx="1" fill="#3C3C3C"/><rect x="1.5" y="4.5" width="4.3" height="3" fill="#fff"/><rect x="7.3" y="4.5" width="4.3" height="3" fill="#fff"/><rect x="13.1" y="4.5" width="4.3" height="3" fill="#fff"/><rect x="1.5" y="8.9" width="4.3" height="3" fill="#fff"/><rect x="7.3" y="8.9" width="4.3" height="3" fill="#fff"/><rect x="13.1" y="8.9" width="4.3" height="3" fill="#fff"/><rect x="1.5" y="13.3" width="4.3" height="3" fill="#fff"/><rect x="7.3" y="13.3" width="4.3" height="3" fill="#fff"/><rect x="13.1" y="13.3" width="4.3" height="3" fill="#fff"/></svg>
<div class="t" style="left:150px;top:784.66px;font-size:15.8px;color:#1E1E1E;font-weight:normal;">store</div>
<svg class="a" style="left:68.5px;top:817.45px;" width="10" height="13" viewBox="0 0 10 13"><path d="M1 0.5 L8.5 6.5 L1 12.5 L4.2 6.5 Z" fill="#1F7BD8"/></svg>
<svg class="a" style="left:92px;top:813.75px;" width="20" height="17" viewBox="0 0 20 17"><path d="M0 3 L7 3 L8.5 0.5 L19 0.5 L19 16 L0 16 Z" fill="#DDB77A"/><path d="M9 2.5 L18 2.5" stroke="#F8F0E0" stroke-width="1.3"/></svg>
<div class="t" style="left:122px;top:809.85px;font-size:15.8px;color:#1E1E1E;font-weight:normal;">Views</div>
<svg class="a" style="left:68.5px;top:842.6400000000001px;" width="10" height="13" viewBox="0 0 10 13"><path d="M1 0.5 L8.5 6.5 L1 12.5 L4.2 6.5 Z" fill="#1F7BD8"/></svg>
<svg class="a" style="left:92px;top:838.94px;" width="20" height="17" viewBox="0 0 20 17"><path d="M0 3 L7 3 L8.5 0.5 L19 0.5 L19 16 L0 16 Z" fill="#DDB77A"/><path d="M9 2.5 L18 2.5" stroke="#F8F0E0" stroke-width="1.3"/></svg>
<div class="t" style="left:122px;top:835.04px;font-size:15.8px;color:#1E1E1E;font-weight:normal;">Procedures</div>
<svg class="a" style="left:68.5px;top:867.83px;" width="10" height="13" viewBox="0 0 10 13"><path d="M1 0.5 L8.5 6.5 L1 12.5 L4.2 6.5 Z" fill="#1F7BD8"/></svg>
<svg class="a" style="left:92px;top:864.13px;" width="20" height="17" viewBox="0 0 20 17"><path d="M0 3 L7 3 L8.5 0.5 L19 0.5 L19 16 L0 16 Z" fill="#DDB77A"/><path d="M9 2.5 L18 2.5" stroke="#F8F0E0" stroke-width="1.3"/></svg>
<div class="t" style="left:122px;top:860.23px;font-size:15.8px;color:#1E1E1E;font-weight:normal;">Functions</div>
<svg class="a" style="left:68.5px;top:893.0200000000001px;" width="10" height="13" viewBox="0 0 10 13"><path d="M1 0.5 L8.5 6.5 L1 12.5 L4.2 6.5 Z" fill="#1F7BD8"/></svg>
<svg class="a" style="left:92px;top:889.32px;" width="20" height="17" viewBox="0 0 20 17"><path d="M0 3 L7 3 L8.5 0.5 L19 0.5 L19 16 L0 16 Z" fill="#DDB77A"/><path d="M9 2.5 L18 2.5" stroke="#F8F0E0" stroke-width="1.3"/></svg>
<div class="t" style="left:122px;top:885.42px;font-size:15.8px;color:#1E1E1E;font-weight:normal;">Triggers</div>
<div class="a" style="left:5px;top:907px;width:343px;height:25px;background:#F5F5F5;"></div>
<div class="a" style="left:30px;top:907px;width:230px;height:25px;background:#DCDCE0;"></div>
<div class="a m" style="left:412px;top:142.40px;font-size:17.25px;line-height:22.2px;white-space:pre;color:#000000"><span style="color:#0000FF">SELECT</span></div>
<div class="a m" style="left:412px;top:164.60px;font-size:17.25px;line-height:22.2px;white-space:pre;color:#000000">&nbsp;&nbsp;a<span style="color:#808080">.</span>address<span style="color:#808080">,</span></div>
<div class="a m" style="left:412px;top:186.80px;font-size:17.25px;line-height:22.2px;white-space:pre;color:#000000">&nbsp;&nbsp;a<span style="color:#808080">.</span>city_id<span style="color:#808080">,</span></div>
<div class="a m" style="left:412px;top:209.00px;font-size:17.25px;line-height:22.2px;white-space:pre;color:#000000">&nbsp;&nbsp;a<span style="color:#808080">.</span>postal_code<span style="color:#808080">,</span></div>
<div class="a m" style="left:412px;top:231.20px;font-size:17.25px;line-height:22.2px;white-space:pre;color:#000000">&nbsp;&nbsp;a<span style="color:#808080">.</span>phone<span style="color:#808080">,</span></div>
<div class="a m" style="left:412px;top:253.40px;font-size:17.25px;line-height:22.2px;white-space:pre;color:#000000">&nbsp;&nbsp;c<span style="color:#808080">.</span>city_id<span style="color:#808080">,</span></div>
<div class="a m" style="left:412px;top:275.60px;font-size:17.25px;line-height:22.2px;white-space:pre;color:#000000">&nbsp;&nbsp;c<span style="color:#808080">.</span>city<span style="color:#808080">,</span></div>
<div class="a m" style="left:412px;top:297.80px;font-size:17.25px;line-height:22.2px;white-space:pre;color:#000000">&nbsp;&nbsp;c<span style="color:#808080">.</span>country_id<span style="color:#808080">,</span></div>
<div class="a m" style="left:412px;top:320.00px;font-size:17.25px;line-height:22.2px;white-space:pre;color:#000000">&nbsp;&nbsp;c<span style="color:#808080">.</span>last_update</div>
<div class="a m" style="left:412px;top:342.20px;font-size:17.25px;line-height:22.2px;white-space:pre;color:#000000"><span style="color:#0000FF">FROM</span>&nbsp;city&nbsp;c<span style="color:#808080">,</span></div>
<div class="a m" style="left:412px;top:364.40px;font-size:17.25px;line-height:22.2px;white-space:pre;color:#000000">&nbsp;&nbsp;&nbsp;&nbsp;&nbsp;address&nbsp;a</div>
<div class="a m" style="left:412px;top:386.60px;font-size:17.25px;line-height:22.2px;white-space:pre;color:#000000">&nbsp;&nbsp;&nbsp;&nbsp;&nbsp;&nbsp;&nbsp;<span style="color:#0000FF">JOIN</span>&nbsp;customer&nbsp;c1</div>
<div class="a m" style="left:412px;top:408.80px;font-size:17.25px;line-height:22.2px;white-space:pre;color:#000000">&nbsp;&nbsp;&nbsp;&nbsp;&nbsp;&nbsp;&nbsp;&nbsp;&nbsp;<span style="color:#0000FF">ON</span>&nbsp;a<span style="color:#808080">.</span>address_id&nbsp;<span style="color:#808080">=</span>&nbsp;c1<span style="color:#808080">.</span>address_id</div>
<div class="a m" style="left:412px;top:431.00px;font-size:17.25px;line-height:22.2px;white-space:pre;color:#000000">&nbsp;&nbsp;&nbsp;&nbsp;&nbsp;&nbsp;&nbsp;&nbsp;&nbsp;<span style="color:#0000FF">JOIN</span>&nbsp;</div>
<div class="a" style="left:357px;top:140px;width:29px;height:349px;background:#F5F5F5;"></div>
<svg class="a" style="left:392px;top:144px;" width="15" height="307" viewBox="0 0 15 307"><rect x="1" y="1" width="12.5" height="12.5" fill="#fff" stroke="#C8CAD6" stroke-width="1.3"/><path d="M3.5 7.2 L11 7.2" stroke="#B8BAC6" stroke-width="1.3"/><path d="M7.2 13.5 L7.2 305 L14 305" fill="none" stroke="#C8CAD6" stroke-width="1.3"/></svg>
<svg class="a" style="left:543px;top:444px;" width="16" height="8" viewBox="0 0 16 8"><path d="M1 1 Q3 7 5 5 Q8 2 10 5 Q12 8 15 3" fill="none" stroke="#FF0000" stroke-width="2"/></svg>
<div class="a" style="left:557px;top:430px;width:2px;height:21px;background:#000;"></div>
<div class="a" style="left:392px;top:572px;width:1px;height:54px;background:#D9D9E3;"></div>
<div class="a" style="left:593px;top:572px;width:1px;height:54px;background:#D9D9E3;"></div>
<div class="a" style="left:763px;top:572px;width:1px;height:54px;background:#D9D9E3;"></div>
<div class="a" style="left:877px;top:572px;width:1px;height:54px;background:#D9D9E3;"></div>
<div class="a" style="left:1003px;top:572px;width:1px;height:54px;background:#D9D9E3;"></div>
<div class="a" style="left:1173px;top:572px;width:1px;height:54px;background:#D9D9E3;"></div>
<div class="a" style="left:1329px;top:572px;width:1px;height:54px;background:#D9D9E3;"></div>
<div class="a" style="left:392px;top:627px;width:1px;height:238px;background:#D9D9E3;"></div>
<div class="a" style="left:593px;top:627px;width:1px;height:238px;background:#D9D9E3;"></div>
<div class="a" style="left:763px;top:627px;width:1px;height:238px;background:#D9D9E3;"></div>
<div class="a" style="left:877px;top:627px;width:1px;height:238px;background:#D9D9E3;"></div>
<div class="a" style="left:1003px;top:627px;width:1px;height:238px;background:#D9D9E3;"></div>
<div class="a" style="left:1173px;top:627px;width:1px;height:238px;background:#D9D9E3;"></div>
<div class="a" style="left:1329px;top:627px;width:1px;height:238px;background:#D9D9E3;"></div>
<div class="a" style="left:392px;top:657px;width:1017px;height:1px;background:#D9D9E3;"></div>
<div class="a" style="left:392px;top:688px;width:1017px;height:1px;background:#D9D9E3;"></div>
<div class="a" style="left:392px;top:719px;width:1017px;height:1px;background:#D9D9E3;"></div>
<div class="a" style="left:392px;top:750px;width:1017px;height:1px;background:#D9D9E3;"></div>
<div class="a" style="left:392px;top:781px;width:1017px;height:1px;background:#D9D9E3;"></div>
<div class="a" style="left:392px;top:812px;width:1017px;height:1px;background:#D9D9E3;"></div>
<div class="a" style="left:392px;top:843px;width:1017px;height:1px;background:#D9D9E3;"></div>
<div class="a" style="left:393px;top:572px;width:1042px;height:54px;overflow:hidden">
<div class="t" style="left:9px;top:5px;font-size:16px;color:#1E1E1E">address</div>
<div class="t" style="left:9px;top:23px;font-size:14.2px;color:#A0A0A0">VARCHAR(50)</div>
<div class="t" style="left:211px;top:5px;font-size:16px;color:#1E1E1E">address_id</div>
<div class="t" style="left:211px;top:23px;font-size:14.2px;color:#A0A0A0">UNSIGNED SMALLINT</div>
<div class="t" style="left:381px;top:5px;font-size:16px;color:#1E1E1E">postal_code</div>
<div class="t" style="left:381px;top:23px;font-size:14.2px;color:#A0A0A0">VARCHAR(10)</div>
<div class="t" style="left:495px;top:5px;font-size:16px;color:#1E1E1E">phone</div>
<div class="t" style="left:495px;top:23px;font-size:14.2px;color:#A0A0A0">VARCHAR(20)</div>
<div class="t" style="left:621px;top:5px;font-size:16px;color:#1E1E1E">city_id1</div>
<div class="t" style="left:621px;top:23px;font-size:14.2px;color:#A0A0A0">UNSIGNED SMALLINT</div>
<div class="t" style="left:789px;top:5px;font-size:16px;color:#1E1E1E">city</div>
<div class="t" style="left:789px;top:23px;font-size:14.2px;color:#A0A0A0">VARCHAR(50)</div>
<div class="t" style="left:946px;top:5px;font-size:16px;color:#1E1E1E">country_id</div>
<div class="t" style="left:946px;top:23px;font-size:14.2px;color:#A0A0A0">UNSIGNED SMALLINT</div>
</div>
<div class="a" style="left:356px;top:627px;width:1053px;height:238px;overflow:hidden">
<div class="t" style="left:47px;top:1.2px;font-size:15.5px;color:#1E1E1E">1325 Fukuyama Street</div>
<div class="t" style="right:655px;top:1.2px;font-size:15.5px;color:#1E1E1E">1</div>
<div class="t" style="left:418px;top:1.2px;font-size:15.5px;color:#1E1E1E">35717</div>
<div class="t" style="left:529px;top:1.2px;font-size:15.5px;color:#1E1E1E">496325436131</div>
<div class="t" style="right:244px;top:1.2px;font-size:15.5px;color:#1E1E1E">1</div>
<div class="t" style="left:826px;top:1.2px;font-size:15.5px;color:#1E1E1E">A Corua (La Corua)</div>
<div class="t" style="left:47px;top:32.2px;font-size:15.5px;color:#1E1E1E">1331 Usak Boulevard</div>
<div class="t" style="right:655px;top:32.2px;font-size:15.5px;color:#1E1E1E">2</div>
<div class="t" style="left:418px;top:32.2px;font-size:15.5px;color:#1E1E1E">61960</div>
<div class="t" style="left:529px;top:32.2px;font-size:15.5px;color:#1E1E1E">145308717464</div>
<div class="t" style="right:244px;top:32.2px;font-size:15.5px;color:#1E1E1E">1</div>
<div class="t" style="left:826px;top:32.2px;font-size:15.5px;color:#1E1E1E">A Corua (La Corua)</div>
<div class="t" style="left:47px;top:63.2px;font-size:15.5px;color:#1E1E1E">1103 Quilmes Boulevard</div>
<div class="t" style="right:655px;top:63.2px;font-size:15.5px;color:#1E1E1E">503</div>
<div class="t" style="left:418px;top:63.2px;font-size:15.5px;color:#1E1E1E">52137</div>
<div class="t" style="left:529px;top:63.2px;font-size:15.5px;color:#1E1E1E">644021380889</div>
<div class="t" style="right:244px;top:63.2px;font-size:15.5px;color:#1E1E1E">1</div>
<div class="t" style="left:826px;top:63.2px;font-size:15.5px;color:#1E1E1E">A Corua (La Corua)</div>
<div class="t" style="left:47px;top:94.2px;font-size:15.5px;color:#1E1E1E">1101 Bucuresti Boulevard</div>
<div class="t" style="right:655px;top:94.2px;font-size:15.5px;color:#1E1E1E">401</div>
<div class="t" style="left:418px;top:94.2px;font-size:15.5px;color:#1E1E1E">97661</div>
<div class="t" style="left:529px;top:94.2px;font-size:15.5px;color:#1E1E1E">199514580428</div>
<div class="t" style="right:244px;top:94.2px;font-size:15.5px;color:#1E1E1E">1</div>
<div class="t" style="left:826px;top:94.2px;font-size:15.5px;color:#1E1E1E">A Corua (La Corua)</div>
<div class="t" style="left:47px;top:125.2px;font-size:15.5px;color:#1E1E1E">844 Bucuresti Place</div>
<div class="t" style="right:655px;top:125.2px;font-size:15.5px;color:#1E1E1E">242</div>
<div class="t" style="left:418px;top:125.2px;font-size:15.5px;color:#1E1E1E">36603</div>
<div class="t" style="left:529px;top:125.2px;font-size:15.5px;color:#1E1E1E">935952366111</div>
<div class="t" style="right:244px;top:125.2px;font-size:15.5px;color:#1E1E1E">1</div>
<div class="t" style="left:826px;top:125.2px;font-size:15.5px;color:#1E1E1E">A Corua (La Corua)</div>
<div class="t" style="left:47px;top:156.2px;font-size:15.5px;color:#1E1E1E">1837 Kaduna Parkway</div>
<div class="t" style="right:655px;top:156.2px;font-size:15.5px;color:#1E1E1E">241</div>
<div class="t" style="left:418px;top:156.2px;font-size:15.5px;color:#1E1E1E">82580</div>
<div class="t" style="left:529px;top:156.2px;font-size:15.5px;color:#1E1E1E">640843562301</div>
<div class="t" style="right:244px;top:156.2px;font-size:15.5px;color:#1E1E1E">1</div>
<div class="t" style="left:826px;top:156.2px;font-size:15.5px;color:#1E1E1E">A Corua (La Corua)</div>
<div class="t" style="left:47px;top:187.2px;font-size:15.5px;color:#1E1E1E">1895 Zhezqazghan Drive</div>
<div class="t" style="right:655px;top:187.2px;font-size:15.5px;color:#1E1E1E">177</div>
<div class="t" style="left:418px;top:187.2px;font-size:15.5px;color:#1E1E1E">36693</div>
<div class="t" style="left:529px;top:187.2px;font-size:15.5px;color:#1E1E1E">137809746111</div>
<div class="t" style="right:244px;top:187.2px;font-size:15.5px;color:#1E1E1E">1</div>
<div class="t" style="left:826px;top:187.2px;font-size:15.5px;color:#1E1E1E">A Corua (La Corua)</div>
<div class="t" style="left:47px;top:218.2px;font-size:15.5px;color:#1E1E1E">42 Fontana Avenue</div>
<div class="t" style="right:655px;top:218.2px;font-size:15.5px;color:#1E1E1E">512</div>
<div class="t" style="left:418px;top:218.2px;font-size:15.5px;color:#1E1E1E">14684</div>
<div class="t" style="left:529px;top:218.2px;font-size:15.5px;color:#1E1E1E">437829801725</div>
<div class="t" style="right:244px;top:218.2px;font-size:15.5px;color:#1E1E1E">1</div>
<div class="t" style="left:826px;top:218.2px;font-size:15.5px;color:#1E1E1E">A Corua (La Corua)</div>
</div>
<svg class="a" style="left:365px;top:634px;" width="18" height="15" viewBox="0 0 18 15"><path d="M1 7.5 L16 7.5 M10 1.5 L16 7.5 L10 13.5" fill="none" stroke="#1F7BD8" stroke-width="1.6"/></svg>
<svg class="a" style="left:1416.0px;top:636.5px;" width="10" height="7" viewBox="0 0 10 7"><path d="M0 7 L5.0 0 L10 7 Z" fill="#707070"/></svg>
<svg class="a" style="left:1416.0px;top:848.5px;" width="10" height="7" viewBox="0 0 10 7"><path d="M0 0 L5.0 7 L10 0 Z" fill="#707070"/></svg>
<svg class="a" style="left:330.0px;top:190.5px;" width="10" height="7" viewBox="0 0 10 7"><path d="M0 7 L5.0 0 L10 7 Z" fill="#707070"/></svg>
<svg class="a" style="left:330.0px;top:889.5px;" width="10" height="7" viewBox="0 0 10 7"><path d="M0 0 L5.0 7 L10 0 Z" fill="#707070"/></svg>
<svg class="a" style="left:12.5px;top:913.0px;" width="7" height="10" viewBox="0 0 7 10"><path d="M7 0 L0 5.0 L7 10 Z" fill="#707070"/></svg>
<svg class="a" style="left:306.5px;top:913.0px;" width="7" height="10" viewBox="0 0 7 10"><path d="M0 0 L7 5.0 L0 10 Z" fill="#707070"/></svg>
<svg class="a" style="left:1416.0px;top:172.5px;" width="10" height="7" viewBox="0 0 10 7"><path d="M0 7 L5.0 0 L10 7 Z" fill="#707070"/></svg>
<svg class="a" style="left:1416.0px;top:472.5px;" width="10" height="7" viewBox="0 0 10 7"><path d="M0 0 L5.0 7 L10 0 Z" fill="#707070"/></svg>
<svg class="a" style="left:394.5px;top:497.0px;" width="7" height="10" viewBox="0 0 7 10"><path d="M7 0 L0 5.0 L7 10 Z" fill="#C0C0C0"/></svg>
<svg class="a" style="left:1391.5px;top:497.0px;" width="7" height="10" viewBox="0 0 7 10"><path d="M0 0 L7 5.0 L0 10 Z" fill="#C0C0C0"/></svg>
<svg class="a" style="left:722.5px;top:873.0px;" width="7" height="10" viewBox="0 0 7 10"><path d="M7 0 L0 5.0 L7 10 Z" fill="#707070"/></svg>
<svg class="a" style="left:1392.5px;top:873.0px;" width="7" height="10" viewBox="0 0 7 10"><path d="M0 0 L7 5.0 L0 10 Z" fill="#707070"/></svg>
<div class="t" style="left:428px;top:863.00px;font-size:16px;color:#1E1E1E;font-weight:normal;">Record 1 of 1000</div>
<div class="a" style="left:530px;top:451px;width:512px;height:247px;background:#F2F2F2;border:1px solid #C8C8C8;box-sizing:border-box;box-shadow:1px 1px 1px rgba(0,0,0,0.12);"></div>
<div class="a" style="left:1014px;top:452px;width:27px;height:245px;background:#F5F5F5;"></div>
<div class="a" style="left:1014px;top:479px;width:25px;height:25px;background:#DFDFE3;"></div>
<svg class="a" style="left:1021.0px;top:463.0px;" width="10" height="7" viewBox="0 0 10 7"><path d="M0 7 L5.0 0 L10 7 Z" fill="#707070"/></svg>
<svg class="a" style="left:1021.0px;top:678.5px;" width="10" height="7" viewBox="0 0 10 7"><path d="M0 0 L5.0 7 L10 0 Z" fill="#707070"/></svg>
<div class="a" style="left:560px;top:454px;width:454px;height:28px;border:1.5px solid #3399FF;border-right:none;box-sizing:border-box;"></div>
<svg class="a" style="left:538px;top:458.4px;" width="17" height="17" viewBox="0 0 17 17"><rect x="0.8" y="0.8" width="9.5" height="9.5" fill="none" stroke="#3C3C3C" stroke-width="1.5"/><rect x="6.2" y="6.2" width="9.8" height="9.8" fill="#F2F2F2" stroke="#3C3C3C" stroke-width="1.5"/><rect x="6.2" y="6.2" width="4" height="4" fill="#3C3C3C"/></svg>
<div class="t" style="left:562px;top:455.00px;font-size:16px;color:#1E1E1E;font-weight:normal;">address a1 <span style="color:#0000FF">ON</span> c1.address_id = a1.address_id</div>
<svg class="a" style="left:538px;top:484.9px;" width="17" height="17" viewBox="0 0 17 17"><rect x="0.8" y="0.8" width="9.5" height="9.5" fill="none" stroke="#3C3C3C" stroke-width="1.5"/><rect x="6.2" y="6.2" width="9.8" height="9.8" fill="#F2F2F2" stroke="#3C3C3C" stroke-width="1.5"/><rect x="6.2" y="6.2" width="4" height="4" fill="#3C3C3C"/></svg>
<div class="t" style="left:562px;top:481.50px;font-size:16px;color:#1E1E1E;font-weight:normal;">city c2 <span style="color:#0000FF">ON</span> a.city_id = c2.city_id</div>
<svg class="a" style="left:538px;top:511.4px;" width="17" height="17" viewBox="0 0 17 17"><rect x="0.8" y="0.8" width="9.5" height="9.5" fill="none" stroke="#3C3C3C" stroke-width="1.5"/><rect x="6.2" y="6.2" width="9.8" height="9.8" fill="#F2F2F2" stroke="#3C3C3C" stroke-width="1.5"/><rect x="6.2" y="6.2" width="4" height="4" fill="#3C3C3C"/></svg>
<div class="t" style="left:562px;top:508.00px;font-size:16px;color:#1E1E1E;font-weight:normal;">customer c2 <span style="color:#0000FF">ON</span> a.address_id = c2.address_id</div>
<svg class="a" style="left:538px;top:537.9px;" width="17" height="17" viewBox="0 0 17 17"><rect x="0.8" y="0.8" width="9.5" height="9.5" fill="none" stroke="#3C3C3C" stroke-width="1.5"/><rect x="6.2" y="6.2" width="9.8" height="9.8" fill="#F2F2F2" stroke="#3C3C3C" stroke-width="1.5"/><rect x="6.2" y="6.2" width="4" height="4" fill="#3C3C3C"/></svg>
<div class="t" style="left:562px;top:534.50px;font-size:16px;color:#1E1E1E;font-weight:normal;">payment p <span style="color:#0000FF">ON</span> c1.customer_id = p.customer_id</div>
<svg class="a" style="left:538px;top:564.4px;" width="17" height="17" viewBox="0 0 17 17"><rect x="0.8" y="0.8" width="9.5" height="9.5" fill="none" stroke="#3C3C3C" stroke-width="1.5"/><rect x="6.2" y="6.2" width="9.8" height="9.8" fill="#F2F2F2" stroke="#3C3C3C" stroke-width="1.5"/><rect x="6.2" y="6.2" width="4" height="4" fill="#3C3C3C"/></svg>
<div class="t" style="left:562px;top:561.00px;font-size:16px;color:#1E1E1E;font-weight:normal;">rental r <span style="color:#0000FF">ON</span> c1.customer_id = r.customer_id</div>
<svg class="a" style="left:538px;top:590.9px;" width="17" height="17" viewBox="0 0 17 17"><rect x="0.8" y="0.8" width="9.5" height="9.5" fill="none" stroke="#3C3C3C" stroke-width="1.5"/><rect x="6.2" y="6.2" width="9.8" height="9.8" fill="#F2F2F2" stroke="#3C3C3C" stroke-width="1.5"/><rect x="6.2" y="6.2" width="4" height="4" fill="#3C3C3C"/></svg>
<div class="t" style="left:562px;top:587.50px;font-size:16px;color:#1E1E1E;font-weight:normal;">staff s <span style="color:#0000FF">ON</span> a.address_id = s.address_id</div>
<svg class="a" style="left:538px;top:617.4px;" width="17" height="17" viewBox="0 0 17 17"><rect x="0.8" y="0.8" width="9.5" height="9.5" fill="none" stroke="#3C3C3C" stroke-width="1.5"/><rect x="6.2" y="6.2" width="9.8" height="9.8" fill="#F2F2F2" stroke="#3C3C3C" stroke-width="1.5"/><rect x="6.2" y="6.2" width="4" height="4" fill="#3C3C3C"/></svg>
<div class="t" style="left:562px;top:614.00px;font-size:16px;color:#1E1E1E;font-weight:normal;">store s <span style="color:#0000FF">ON</span> a.address_id = s.address_id</div>
<svg class="a" style="left:538px;top:643.9px;" width="17" height="17" viewBox="0 0 17 17"><rect x="0.8" y="0.8" width="9.5" height="9.5" fill="none" stroke="#3C3C3C" stroke-width="1.5"/><rect x="6.2" y="6.2" width="9.8" height="9.8" fill="#F2F2F2" stroke="#3C3C3C" stroke-width="1.5"/><rect x="6.2" y="6.2" width="4" height="4" fill="#3C3C3C"/></svg>
<div class="t" style="left:562px;top:640.50px;font-size:16px;color:#1E1E1E;font-weight:normal;">store s <span style="color:#0000FF">ON</span> c1.store_id = s.store_id</div>
<svg class="a" style="left:538px;top:669.5px;" width="19" height="18" viewBox="0 0 19 18"><rect x="0" y="0" width="19" height="18" rx="1" fill="#3C3C3C"/><rect x="1.5" y="4.5" width="4.3" height="3" fill="#fff"/><rect x="7.3" y="4.5" width="4.3" height="3" fill="#fff"/><rect x="13.1" y="4.5" width="4.3" height="3" fill="#fff"/><rect x="1.5" y="8.9" width="4.3" height="3" fill="#fff"/><rect x="7.3" y="8.9" width="4.3" height="3" fill="#fff"/><rect x="13.1" y="8.9" width="4.3" height="3" fill="#fff"/><rect x="1.5" y="13.3" width="4.3" height="3" fill="#fff"/><rect x="7.3" y="13.3" width="4.3" height="3" fill="#fff"/><rect x="13.1" y="13.3" width="4.3" height="3" fill="#fff"/></svg>
<div class="t" style="left:562px;top:667.00px;font-size:16px;color:#1E1E1E;font-weight:normal;">actor</div>
<div class="t" style="left:908px;top:667.00px;font-size:16px;color:#9A9A9A;font-weight:normal;">sakila</div>
<svg class="a" style="left:12px;top:14px;" width="32" height="35" viewBox="0 0 32 35"><defs><linearGradient id="lg" x1="0" y1="0" x2="1" y2="1"><stop offset="0" stop-color="#22A6FF"/><stop offset="1" stop-color="#0050F0"/></linearGradient></defs><path d="M16 1 L30.5 9.2 L30.5 25.8 L16 34 L1.5 25.8 L1.5 9.2 Z" fill="url(#lg)"/><path d="M22.5 12.5 L12.2 12.5 Q8.6 12.5 8.6 15.7 Q8.6 18.9 12.2 18.9 L19.8 18.9 Q23.4 18.9 23.4 22.1 Q23.4 25.3 19.8 25.3 L9.5 25.3" fill="none" stroke="#fff" stroke-width="2.2"/></svg>
<div class="a" style="left:10.5px;top:67.5px;width:3px;height:3px;background:#A0A0A0;border-radius:1px;"></div>
<div class="a" style="left:10.5px;top:73.5px;width:3px;height:3px;background:#A0A0A0;border-radius:1px;"></div>
<div class="a" style="left:10.5px;top:79.5px;width:3px;height:3px;background:#A0A0A0;border-radius:1px;"></div>
<div class="a" style="left:851px;top:67.5px;width:3px;height:3px;background:#A0A0A0;border-radius:1px;"></div>
<div class="a" style="left:851px;top:73.5px;width:3px;height:3px;background:#A0A0A0;border-radius:1px;"></div>
<div class="a" style="left:851px;top:79.5px;width:3px;height:3px;background:#A0A0A0;border-radius:1px;"></div>
<svg class="a" style="left:36px;top:64px;" width="23" height="20" viewBox="0 0 23 20"><rect x="7" y="2" width="15" height="3" fill="#404040"/><rect x="11.5" y="6.5" width="4" height="2" fill="#404040"/><rect x="11" y="11" width="8" height="3" fill="#404040"/><rect x="7" y="15.5" width="7" height="2.5" fill="#404040"/><path d="M3.2 5 L7.3 5 L7.3 9.8 L10 9.8 L5.25 15.5 L0.5 9.8 L3.2 9.8 Z" fill="#0F5CB5"/></svg>
<div class="t" style="left:84px;top:59.5px;font-size:15.5px;color:#4A4A4A;font-weight:bold;letter-spacing:-1px">[@]</div>
<svg class="a" style="left:132px;top:64px;" width="22" height="21" viewBox="0 0 22 21"><path d="M1 0.5 L8.5 7.5 L5 8 L7 12 L5.5 12.5 L3.5 8.5 L1 11 Z" fill="#0F5CB5"/><rect x="4" y="9.5" width="16.5" height="10" fill="none" stroke="#404040" stroke-width="2"/><rect x="7.5" y="13.5" width="9" height="2" fill="#404040"/></svg>
<div class="t" style="left:179px;top:59px;font-size:18px;color:#404040;font-weight:bold">A</div>
<svg class="a" style="left:190px;top:66px;" width="11" height="16" viewBox="0 0 11 16"><path d="M1 4.5 L5 4.5 L5 1.5 L9.5 5.5 L5 9.5 L5 6.5 L1 6.5 Z" fill="#0F5CB5" stroke="#0F5CB5" stroke-width="1"/><rect x="2" y="13.5" width="2" height="2" fill="#404040"/><rect x="5" y="13.5" width="2" height="2" fill="#404040"/><rect x="8" y="13.5" width="2" height="2" fill="#404040"/></svg>
<svg class="a" style="left:228px;top:63.5px;" width="20" height="22" viewBox="0 0 20 22"><path d="M16.8 12.2 A7.6 7.6 0 1 1 10.2 4.7" fill="none" stroke="#0E5AA7" stroke-width="3.1"/><path d="M9.5 0 L16.5 4.9 L9.5 10 Z" fill="#0E5AA7"/></svg>
<svg class="a" style="left:276px;top:64px;" width="11" height="10" viewBox="0 0 11 10"><path d="M1 5 L4 8.5 L10 0.5" fill="none" stroke="#404040" stroke-width="1.8"/></svg>
<div class="t" style="left:273.5px;top:64.5px;font-size:12.5px;color:#404040;letter-spacing:-0.6px">SQL</div>
<svg class="a" style="left:327px;top:64px;" width="24" height="21" viewBox="0 0 24 21"><rect x="10" y="2" width="12.5" height="1.6" fill="#404040"/><rect x="4.5" y="6.8" width="6" height="2.6" fill="#404040"/><rect x="1.5" y="12.5" width="9" height="2.6" fill="#404040"/><rect x="10" y="18.3" width="12.5" height="1.6" fill="#404040"/><path d="M12 10.8 L17 5.8 L18.5 7.3 L15.8 9.8 L22.5 9.8 L22.5 11.8 L15.8 11.8 L18.5 14.3 L17 15.8 Z" fill="#0F5CB5"/></svg>
<svg class="a" style="left:374px;top:64px;" width="24" height="21" viewBox="0 0 24 21"><rect x="1.5" y="2" width="12.5" height="1.6" fill="#404040"/><rect x="14" y="6.8" width="6" height="2.6" fill="#404040"/><rect x="14" y="12.5" width="9" height="2.6" fill="#404040"/><rect x="1.5" y="18.3" width="12.5" height="1.6" fill="#404040"/><path d="M12 10.8 L7 5.8 L5.5 7.3 L8.2 9.8 L1.5 9.8 L1.5 11.8 L8.2 11.8 L5.5 14.3 L7 15.8 Z" fill="#0F5CB5"/></svg>
<svg class="a" style="left:432px;top:64px;" width="18" height="20" viewBox="0 0 18 20"><rect x="0" y="3" width="2.5" height="1.8" fill="#404040"/><rect x="4" y="3" width="12.5" height="1.8" fill="#404040"/><rect x="4" y="6.2" width="12.5" height="1.8" fill="#3C9A3C"/><rect x="4" y="9.3" width="12.5" height="1.8" fill="#3C9A3C"/><rect x="9" y="12.3" width="7.5" height="1.8" fill="#404040"/><rect x="3.5" y="15.3" width="13" height="1.8" fill="#404040"/></svg>
<svg class="a" style="left:477px;top:64px;" width="21" height="21" viewBox="0 0 21 21"><path d="M2.5 3.5 Q6 1 8.2 3.5 Q10 6.5 5.5 10.5" fill="none" stroke="#1E6FD0" stroke-width="1.8"/><path d="M0.5 1.5 L4.5 1.5 L2.5 6 Z" fill="#1E6FD0"/><rect x="10" y="4.3" width="9" height="1.6" fill="#404040"/><rect x="10" y="7.5" width="9" height="1.6" fill="#404040"/><rect x="10" y="10.7" width="9" height="1.6" fill="#404040"/><rect x="10" y="14" width="9" height="1.6" fill="#404040"/><rect x="7" y="17" width="12" height="1.8" fill="#404040"/></svg>
<svg class="a" style="left:533px;top:64px;" width="18" height="20" viewBox="0 0 18 20"><path d="M1 0.5 L17 0.5 L17 19.5 L9 15 L1 19.5 Z" fill="#404040"/></svg>
<svg class="a" style="left:581px;top:64px;" width="20" height="21" viewBox="0 0 20 21"><path d="M9 2 L19 2 L19 20 L14 16.5 L9 20 Z" fill="#A6A6A6"/><path d="M0.5 5 L5.5 0.5 L5.5 3.5 L12 3.5 L12 6.5 L5.5 6.5 L5.5 9.5 Z" fill="#A6A6A6"/><path d="M9 2 A4.5 4.5 0 0 1 9 10" fill="none" stroke="#A6A6A6" stroke-width="2"/></svg>
<svg class="a" style="left:628px;top:64px;" width="20" height="21" viewBox="0 0 20 21"><path d="M9 2 L19 2 L19 20 L14 16.5 L9 20 Z" fill="#A6A6A6"/><path d="M12 5 L7 0.5 L7 3.5 L0.5 3.5 L0.5 6.5 L7 6.5 L7 9.5 Z" fill="#A6A6A6"/></svg>
<svg class="a" style="left:676px;top:64px;" width="20" height="21" viewBox="0 0 20 21"><path d="M9 2 L19 2 L19 20 L14 16.5 L9 20 Z" fill="#A6A6A6"/><path d="M1 0.5 L12 11.5 M12 0.5 L1 11.5" stroke="#A6A6A6" stroke-width="2.6"/></svg>
<svg class="a" style="left:731px;top:65px;" width="18" height="20" viewBox="0 0 18 20"><path d="M1.5 1 L12 1 L16.5 5.5 L16.5 18.5 L1.5 18.5 Z" fill="#fff" stroke="#404040" stroke-width="2"/><path d="M11.5 1 L11.5 6 L16.5 6" fill="none" stroke="#404040" stroke-width="1.5"/><rect x="4.3" y="4" width="1.6" height="1.6" fill="#404040"/><rect x="4.3" y="7" width="1.6" height="1.6" fill="#404040"/><rect x="4.3" y="10" width="1.6" height="1.6" fill="#404040"/><rect x="4.3" y="13" width="1.6" height="1.6" fill="#404040"/><rect x="4.3" y="16" width="1.6" height="1.6" fill="#404040"/><rect x="7" y="13" width="1.6" height="1.6" fill="#404040"/><rect x="10" y="13" width="1.6" height="1.6" fill="#404040"/><rect x="13" y="13" width="1.6" height="1.6" fill="#404040"/></svg>
<svg class="a" style="left:776px;top:65px;" width="23" height="20" viewBox="0 0 23 20"><rect x="1" y="1" width="11" height="7" fill="#fff" stroke="#1E6FD0" stroke-width="2"/><path d="M3.5 8 L3.5 15 L9 15" fill="none" stroke="#1E6FD0" stroke-width="1.6"/><path d="M8 12.5 L11 15 L8 17.5 Z" fill="#1E6FD0"/><rect x="11" y="11.5" width="11" height="7.5" fill="#fff" stroke="#404040" stroke-width="2"/></svg>
<svg class="a" style="left:821.5px;top:73.05px;" width="9" height="4.5" viewBox="0 0 9 4.5"><path d="M0 0 L9 0 L4.5 4.5 Z" fill="#909090"/></svg>
<svg class="a" style="left:1299.5px;top:73.25px;" width="9" height="4.5" viewBox="0 0 9 4.5"><path d="M0 0 L9 0 L4.5 4.5 Z" fill="#404040"/></svg>
<svg class="a" style="left:1461.0px;top:73.25px;" width="9" height="4.5" viewBox="0 0 9 4.5"><path d="M0 0 L9 0 L4.5 4.5 Z" fill="#909090"/></svg>
<svg class="a" style="left:1406.0px;top:116.25px;" width="9" height="4.5" viewBox="0 0 9 4.5"><path d="M0 0 L9 0 L4.5 4.5 Z" fill="#404040"/></svg>
<svg class="a" style="left:876px;top:64px;" width="11" height="11" viewBox="0 0 11 11"><path d="M5.2 0.5 L5.2 9.5 M0.5 5 L9.8 5" stroke="#2E9A2E" stroke-width="2.8"/></svg>
<svg class="a" style="left:886px;top:64px;" width="13" height="21" viewBox="0 0 13 21"><rect x="2" y="0" width="3" height="5" fill="#3A3A3A"/><rect x="8" y="0" width="3" height="5" fill="#3A3A3A"/><path d="M0 5.5 L13 5.5 L13 8 L10.5 12 L2.5 12 L0 8 Z" fill="#3A3A3A"/><rect x="5" y="11" width="3" height="10" fill="#3A3A3A"/></svg>
<svg class="a" style="left:1345px;top:64px;" width="13" height="21" viewBox="0 0 13 21"><rect x="2" y="0" width="3" height="5" fill="#AAAAAA"/><rect x="8" y="0" width="3" height="5" fill="#AAAAAA"/><path d="M0 5.5 L13 5.5 L13 8 L10.5 12 L2.5 12 L0 8 Z" fill="#AAAAAA"/><rect x="5" y="11" width="3" height="10" fill="#AAAAAA"/></svg>
<svg class="a" style="left:1387px;top:64px;" width="11" height="11" viewBox="0 0 11 11"><path d="M1 1 L9.5 9.5 M9.5 1 L1 9.5" stroke="#D23A2A" stroke-width="1.8"/></svg>
<svg class="a" style="left:1397px;top:64px;" width="13" height="21" viewBox="0 0 13 21"><rect x="2" y="0" width="3" height="5" fill="#2A2A2A"/><rect x="8" y="0" width="3" height="5" fill="#2A2A2A"/><path d="M0 5.5 L13 5.5 L13 8 L10.5 12 L2.5 12 L0 8 Z" fill="#2A2A2A"/><rect x="5" y="11" width="3" height="10" fill="#2A2A2A"/></svg>
<svg class="a" style="left:273px;top:113px;" width="12" height="14" viewBox="0 0 12 14"><rect x="2.5" y="0.5" width="7" height="2" fill="#505050"/><rect x="3.5" y="2" width="5" height="6" fill="none" stroke="#505050" stroke-width="1.6"/><rect x="0.5" y="7.5" width="11" height="1.8" fill="#505050"/><rect x="5.2" y="9" width="1.6" height="5" fill="#505050"/></svg>
<svg class="a" style="left:319px;top:113px;" width="14" height="13" viewBox="0 0 14 13"><path d="M1 0.8 L13 12.2 M13 0.8 L1 12.2" stroke="#505050" stroke-width="1.7"/></svg>
<svg class="a" style="left:19px;top:150.5px;" width="20" height="22" viewBox="0 0 20 22"><path d="M16.8 12.2 A7.6 7.6 0 1 1 10.2 4.7" fill="none" stroke="#0E5AA7" stroke-width="3.1"/><path d="M9.5 0 L16.5 4.9 L9.5 10 Z" fill="#0E5AA7"/></svg>
<svg class="a" style="left:64px;top:152px;" width="22" height="20" viewBox="0 0 22 20"><path d="M2 1 L20 19 M20 1 L2 19" stroke="#A8A8A8" stroke-width="3"/></svg>
<svg class="a" style="left:114px;top:151px;" width="19" height="19" viewBox="0 0 19 19"><rect x="5.5" y="1" width="12" height="10" fill="none" stroke="#404040" stroke-width="1.5"/><rect x="3" y="4" width="12" height="10" fill="#EEEEF2" stroke="#404040" stroke-width="1.5"/><rect x="0.8" y="7" width="12" height="10.5" fill="#EEEEF2" stroke="#404040" stroke-width="1.5"/><rect x="3.8" y="11.5" width="6" height="1.8" fill="#1E6FD0"/></svg>
<div class="a" style="left:150px;top:143px;width:1px;height:35px;background:#CCCEDB;"></div>
<svg class="a" style="left:166px;top:150px;" width="11" height="11" viewBox="0 0 11 11"><path d="M5.2 0.5 L5.2 9.5 M0.5 5 L9.8 5" stroke="#2E9A2E" stroke-width="2.8"/></svg>
<svg class="a" style="left:176px;top:150px;" width="13" height="21" viewBox="0 0 13 21"><rect x="2" y="0" width="3" height="5" fill="#3A3A3A"/><rect x="8" y="0" width="3" height="5" fill="#3A3A3A"/><path d="M0 5.5 L13 5.5 L13 8 L10.5 12 L2.5 12 L0 8 Z" fill="#3A3A3A"/><rect x="5" y="11" width="3" height="10" fill="#3A3A3A"/></svg>
<svg class="a" style="left:218px;top:150px;" width="13" height="21" viewBox="0 0 13 21"><rect x="2" y="0" width="3" height="5" fill="#AAAAAA"/><rect x="8" y="0" width="3" height="5" fill="#AAAAAA"/><path d="M0 5.5 L13 5.5 L13 8 L10.5 12 L2.5 12 L0 8 Z" fill="#AAAAAA"/><rect x="5" y="11" width="3" height="10" fill="#AAAAAA"/></svg>
<svg class="a" style="left:261px;top:150px;" width="11" height="11" viewBox="0 0 11 11"><path d="M1 1 L9.5 9.5 M9.5 1 L1 9.5" stroke="#D23A2A" stroke-width="1.8"/></svg>
<svg class="a" style="left:270px;top:150px;" width="13" height="21" viewBox="0 0 13 21"><rect x="2" y="0" width="3" height="5" fill="#2A2A2A"/><rect x="8" y="0" width="3" height="5" fill="#2A2A2A"/><path d="M0 5.5 L13 5.5 L13 8 L10.5 12 L2.5 12 L0 8 Z" fill="#2A2A2A"/><rect x="5" y="11" width="3" height="10" fill="#2A2A2A"/></svg>
<svg class="a" style="left:328.0px;top:159.25px;" width="9" height="4.5" viewBox="0 0 9 4.5"><path d="M0 0 L9 0 L4.5 4.5 Z" fill="#909090"/></svg>
<div class="a" style="left:356px;top:99px;width:1px;height:40px;background:#CCCEDB;"></div>
<svg class="a" style="left:371px;top:108px;" width="19" height="19" viewBox="0 0 19 19"><path d="M15.5 4.5 A7.7 7.7 0 1 0 16.5 12.5" fill="none" stroke="#707070" stroke-width="2"/><path d="M12.8 6.8 A4.3 4.3 0 1 0 13.5 11.5" fill="none" stroke="#707070" stroke-width="1.6"/><path d="M8 8.5 L9.5 7.2 L9.5 12" fill="none" stroke="#707070" stroke-width="1.3"/></svg>
<svg class="a" style="left:548px;top:107px;" width="23" height="21" viewBox="0 0 23 21"><path d="M6 17 L6 4 Q6 1.5 8.5 1.5 L20.5 1.5 L20.5 4 L17.5 4 L17.5 17.5 Q17.5 19.5 15 19.5 L3 19.5 Q1.5 19.5 1.5 18 L1.5 17 Z" fill="none" stroke="#3A3A3A" stroke-width="2.2" stroke-linejoin="round"/><path d="M1.5 17.2 L11 17.2 L12 19.5 L3 19.5 Z" fill="#3A3A3A"/></svg>
<svg class="a" style="left:674px;top:111px;" width="16" height="16" viewBox="0 0 16 16"><circle cx="8" cy="8" r="7.5" fill="#6E6E6E"/><path d="M5 5 L11 11 M11 5 L5 11" stroke="#fff" stroke-width="1.8"/></svg>
<div class="a" style="left:1409px;top:140px;width:25px;height:23px;background:#F5F5F5;border-left:1px solid #CCCEDB;border-bottom:1px solid #CCCEDB;box-sizing:border-box;"></div>
<svg class="a" style="left:1413px;top:144px;" width="16" height="17" viewBox="0 0 16 17"><path d="M4.5 3.5 L7.5 0.8 L10.5 3.5 Z" fill="#3A3A3A"/><rect x="0.5" y="6.5" width="15" height="3" rx="0.5" fill="#3A3A3A"/><path d="M4.5 12.5 L7.5 15.2 L10.5 12.5 Z" fill="#3A3A3A"/></svg>
<div class="a" style="left:385px;top:489px;width:1px;height:25px;background:#CCCEDB;"></div>
<svg class="a" style="left:365px;top:494px;" width="14" height="15" viewBox="0 0 14 15"><rect x="5.8" y="0" width="2.6" height="15" fill="#404040"/><path d="M0.5 7.5 L4 4.5 L4 10.5 Z" fill="#404040"/><path d="M13.5 7.5 L10 4.5 L10 10.5 Z" fill="#404040"/></svg>
<svg class="a" style="left:372px;top:539px;" width="20" height="22" viewBox="0 0 20 22"><path d="M16.8 12.2 A7.6 7.6 0 1 1 10.2 4.7" fill="none" stroke="#0E5AA7" stroke-width="3.1"/><path d="M9.5 0 L16.5 4.9 L9.5 10 Z" fill="#0E5AA7"/></svg>
<svg class="a" style="left:416px;top:543px;" width="23" height="19" viewBox="0 0 23 19"><path d="M2 1 L21 18 M21 1 L2 18" stroke="#A8A8A8" stroke-width="3"/></svg>
<div class="a" style="left:455px;top:533px;width:1px;height:34px;background:#CCCEDB;"></div>
<svg class="a" style="left:470px;top:539px;" width="23" height="21" viewBox="0 0 23 21"><rect x="2" y="9" width="19.5" height="11" fill="#A8A8A8"/><rect x="4" y="10.5" width="4.5" height="8" fill="#DCDCE0"/><rect x="9.5" y="10.5" width="4.5" height="8" fill="#DCDCE0"/><path d="M3 3 L5 1 M6 4 L15 13" stroke="#A8A8A8" stroke-width="3.5"/></svg>
<svg class="a" style="left:519px;top:548px;" width="14" height="12" viewBox="0 0 14 12"><path d="M1.5 1 L6.5 11 L11.5 1" fill="none" stroke="#A8A8A8" stroke-width="3.5"/></svg>
<svg class="a" style="left:1038px;top:539px;" width="12" height="22" viewBox="0 0 12 22"><rect x="-10" y="1" width="20" height="20" fill="none" stroke="#404040" stroke-width="2"/><rect x="1" y="5" width="6" height="5" fill="#404040"/><rect x="1" y="13" width="6" height="5" fill="#404040"/></svg>
<div class="a" style="left:1066px;top:533px;width:1px;height:34px;background:#CCCEDB;"></div>
<svg class="a" style="left:1083px;top:538px;" width="22" height="23" viewBox="0 0 22 23"><rect x="1" y="1" width="20" height="21" fill="none" stroke="#A8A8A8" stroke-width="2"/><rect x="1" y="1" width="20" height="4" fill="#A8A8A8"/><path d="M7.5 5 L7.5 22 M14.5 5 L14.5 22" stroke="#A8A8A8" stroke-width="2"/></svg>
<svg class="a" style="left:1129px;top:538px;" width="23" height="23" viewBox="0 0 23 23"><circle cx="14" cy="7" r="5" fill="none" stroke="#404040" stroke-width="2"/><path d="M17.5 10.5 L22 15" stroke="#404040" stroke-width="2.2"/><path d="M5 9 L5 18" stroke="#0F5CB5" stroke-width="2.5"/><path d="M0.5 15 L5 21.5 L9.5 15 Z" fill="#0F5CB5"/></svg>
<svg class="a" style="left:1176px;top:538px;" width="24" height="24" viewBox="0 0 24 24"><rect x="6.5" y="8.5" width="16" height="14" fill="#404040"/><rect x="8.5" y="12.2" width="3" height="2" fill="#EEEEF2"/><rect x="13.2" y="12.2" width="3" height="2" fill="#EEEEF2"/><rect x="17.9" y="12.2" width="3" height="2" fill="#EEEEF2"/><rect x="8.5" y="15.8" width="3" height="2" fill="#EEEEF2"/><rect x="13.2" y="15.8" width="3" height="2" fill="#EEEEF2"/><rect x="17.9" y="15.8" width="3" height="2" fill="#EEEEF2"/><rect x="8.5" y="19.4" width="3" height="2" fill="#EEEEF2"/><rect x="13.2" y="19.4" width="3" height="2" fill="#EEEEF2"/><rect x="17.9" y="19.4" width="3" height="2" fill="#EEEEF2"/><path d="M2 8 Q2 2.5 8 2.5 L10 2.5" fill="none" stroke="#1E6FD0" stroke-width="2"/><path d="M9 0 L13 2.5 L9 5.5 Z" fill="#1E6FD0"/></svg>
<svg class="a" style="left:1414.5px;top:548.25px;" width="9" height="4.5" viewBox="0 0 9 4.5"><path d="M0 0 L9 0 L4.5 4.5 Z" fill="#909090"/></svg>
<svg class="a" style="left:360px;top:872px;" width="15" height="11" viewBox="0 0 15 11"><rect x="0" y="0.5" width="1.5" height="10" fill="#A8A8A8"/><path d="M8 0.5 L2.5 5.5 L8 10.5 Z M14 0.5 L8.5 5.5 L14 10.5 Z" fill="#A8A8A8"/></svg>
<svg class="a" style="left:390.0px;top:872.5px;" width="5" height="10" viewBox="0 0 5 10"><path d="M5 0 L0 5.0 L5 10 Z" fill="#A8A8A8"/></svg>
<svg class="a" style="left:581.0px;top:872.5px;" width="5" height="10" viewBox="0 0 5 10"><path d="M0 0 L5 5.0 L0 10 Z" fill="#404040"/></svg>
<svg class="a" style="left:600px;top:872px;" width="15" height="11" viewBox="0 0 15 11"><path d="M0.5 0.5 L6 5.5 L0.5 10.5 Z M6.5 0.5 L12 5.5 L6.5 10.5 Z" fill="#404040"/><rect x="13" y="0.5" width="1.5" height="10" fill="#404040"/></svg>
<svg class="a" style="left:623px;top:870px;" width="15" height="15" viewBox="0 0 15 15"><path d="M7.5 1 L7.5 14 M1 7.5 L14 7.5" stroke="#707070" stroke-width="2"/></svg>
<svg class="a" style="left:647px;top:870px;" width="15" height="15" viewBox="0 0 15 15"><path d="M1 7.5 L14 7.5" stroke="#707070" stroke-width="2"/></svg>
<svg class="a" style="left:670px;top:870px;" width="17" height="15" viewBox="0 0 17 15"><path d="M1 8 L5.5 13 L16 2" fill="none" stroke="#A8A8A8" stroke-width="2"/></svg>
<svg class="a" style="left:696px;top:872px;" width="12" height="12" viewBox="0 0 12 12"><path d="M1 1 L11 11 M11 1 L1 11" stroke="#A8A8A8" stroke-width="1.8"/></svg>
<div class="a" style="left:713px;top:865px;width:25px;height:25px;background:#F5F5F5;"></div>
<svg class="a" style="left:722.5px;top:873.0px;" width="7" height="10" viewBox="0 0 7 10"><path d="M7 0 L0 5.0 L7 10 Z" fill="#707070"/></svg>
<svg class="a" style="left:369px;top:900px;" width="23" height="21" viewBox="0 0 23 21"><path d="M6 17 L6 4 Q6 1.5 8.5 1.5 L20.5 1.5 L20.5 4 L17.5 4 L17.5 17.5 Q17.5 19.5 15 19.5 L3 19.5 Q1.5 19.5 1.5 18 L1.5 17 Z" fill="none" stroke="#3A3A3A" stroke-width="2.2" stroke-linejoin="round"/><path d="M1.5 17.2 L11 17.2 L12 19.5 L3 19.5 Z" fill="#3A3A3A"/></svg>
<div class="t" style="left:398px;top:896.30px;font-size:18px;color:#2D2D30;font-weight:bold;letter-spacing:1.1px;">Text</div>
<div class="a" style="left:452px;top:896px;width:1px;height:32px;background:#CCCEDB;"></div>
<svg class="a" style="left:470px;top:903px;" width="19" height="16" viewBox="0 0 19 16"><path d="M2 5 L17 5 M2 11 L17 11" stroke="#404040" stroke-width="2"/><path d="M5.5 1 L1.5 5 L5.5 9" fill="none" stroke="#404040" stroke-width="1.8"/><path d="M13.5 7 L17.5 11 L13.5 15" fill="none" stroke="#404040" stroke-width="1.8"/></svg>
<svg class="a" style="left:517px;top:901px;" width="20" height="20" viewBox="0 0 20 20"><rect x="1" y="1" width="18" height="18" fill="none" stroke="#404040" stroke-width="1.8"/><rect x="3.8" y="3.8" width="3" height="3" fill="#404040"/><rect x="8.2" y="3.8" width="3" height="3" fill="#404040"/><rect x="12.6" y="3.8" width="3" height="3" fill="#404040"/><rect x="3.8" y="8.2" width="3" height="3" fill="#404040"/><rect x="8.2" y="8.2" width="3" height="3" fill="#404040"/><rect x="12.6" y="8.2" width="3" height="3" fill="#404040"/><rect x="3.8" y="12.6" width="3" height="3" fill="#404040"/><rect x="8.2" y="12.6" width="3" height="3" fill="#404040"/><rect x="12.6" y="12.6" width="3" height="3" fill="#404040"/></svg>
<div class="t" style="left:545px;top:896.30px;font-size:16.5px;color:#1E1E1E;font-weight:normal;">Data</div>
<div class="a" style="left:600px;top:896px;width:1px;height:32px;background:#CCCEDB;"></div>
<svg class="a" style="left:618px;top:902px;" width="18" height="18" viewBox="0 0 18 18"><path d="M9 1 L9 17 M1 9 L17 9" stroke="#2D2D2D" stroke-width="2.8"/></svg>
<div class="a" style="left:670px;top:896px;width:1px;height:32px;background:#CCCEDB;"></div>
<svg class="a" style="left:686px;top:900px;" width="22" height="22" viewBox="0 0 22 22"><circle cx="11" cy="11" r="10.5" fill="#2E9A3E"/><path d="M5.5 11.5 L9.3 15.3 L16.5 6.8" fill="none" stroke="#fff" stroke-width="2.6"/></svg>
<div class="t" style="left:716px;top:896.30px;font-size:17.55px;color:#1E1E1E;font-weight:normal;">Query executed successfully.</div>
<div class="a" style="left:957px;top:896px;width:1px;height:32px;background:#CCCEDB;"></div>
<div class="a" style="left:1080px;top:896px;width:1px;height:32px;background:#CCCEDB;"></div>
<div class="a" style="left:1219px;top:896px;width:1px;height:32px;background:#CCCEDB;"></div>
<div class="a" style="left:1281px;top:896px;width:1px;height:32px;background:#CCCEDB;"></div>
<div class="a" style="left:1353px;top:896px;width:1px;height:32px;background:#CCCEDB;"></div>
<div class="t" style="left:971px;top:896.30px;font-size:16px;color:#1E1E1E;font-weight:normal;">00:00:00.006</div>
<div class="t" style="left:1094px;top:896.30px;font-size:17.4px;color:#1E1E1E;font-weight:normal;">localhost (8.0)</div>
<div class="t" style="left:1233px;top:896.30px;font-size:17px;color:#1E1E1E;font-weight:normal;letter-spacing:0.8px;">root</div>
<div class="t" style="left:1295px;top:896.30px;font-size:17px;color:#1E1E1E;font-weight:normal;">sakila</div>
<svg class="a" style="left:1371px;top:901px;" width="21" height="19" viewBox="0 0 21 19"><rect x="1" y="1" width="19" height="17" fill="#fff" stroke="#2D2D2D" stroke-width="2"/><rect x="1" y="9.5" width="19" height="8.5" fill="#2D2D2D"/></svg>
<svg class="a" style="left:1414.5px;top:909.25px;" width="9" height="4.5" viewBox="0 0 9 4.5"><path d="M0 0 L9 0 L4.5 4.5 Z" fill="#909090"/></svg>
<svg class="a" style="left:1451px;top:120px;" width="23" height="23" viewBox="0 0 23 23"><path d="M4.5 12 L4.5 20 L21 20 L21 1.5 L17 1.5" fill="none" stroke="#3A3A3A" stroke-width="2.2"/><path d="M6 0.5 L15 0.5 Q17.5 0.5 17.5 6.2 Q17.5 12 15 12 L6 12 Q0.8 12 0.8 6.2 Q0.8 0.5 6 0.5 Z" fill="#3A3A3A"/><ellipse cx="15" cy="6.2" rx="1.8" ry="4.5" fill="#fff"/></svg>
<div class="a" style="left:1478px;top:55px;width:2px;height:40px;background:#D8D9E3;"></div>
<div class="a" style="left:1474px;top:960px;width:2px;height:2px;background:#C0C0C0;"></div>
<div class="a" style="left:1474px;top:966px;width:2px;height:2px;background:#C0C0C0;"></div>
<div class="a" style="left:1468px;top:966px;width:2px;height:2px;background:#C0C0C0;"></div>
<div class="a" style="left:1474px;top:972px;width:2px;height:2px;background:#C0C0C0;"></div>
<div class="a" style="left:1468px;top:972px;width:2px;height:2px;background:#C0C0C0;"></div>
<div class="a" style="left:1462px;top:972px;width:2px;height:2px;background:#C0C0C0;"></div>
<div class="a" style="left:1434px;top:140px;width:1px;height:793px;background:#CCCEDB;"></div>
<div class="a" style="left:1435px;top:140px;width:1px;height:793px;background:#EEEEF2;"></div>
<div class="a" style="left:356px;top:99px;width:177px;height:1px;background:#CCCEDB;"></div>
<div class="a" style="left:4px;top:99px;width:345px;height:1px;background:#E0E1E8;"></div>
<div class="a" style="left:348px;top:99px;width:1px;height:40px;background:#E0E1E8;"></div>
</body></html>
